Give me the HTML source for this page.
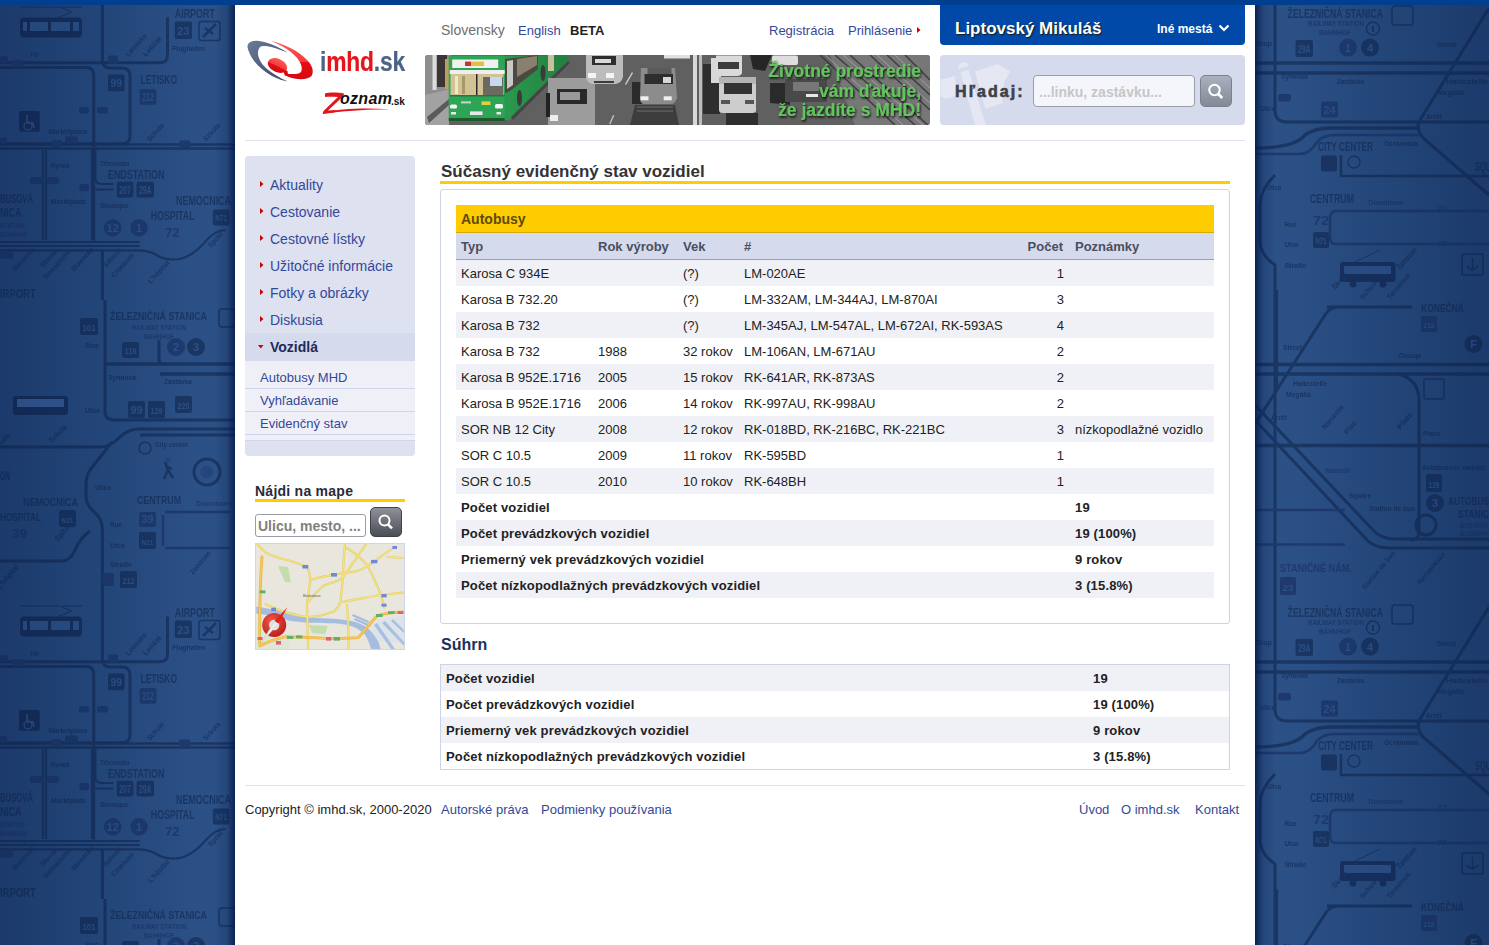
<!DOCTYPE html>
<html><head><meta charset="utf-8">
<style>
*{margin:0;padding:0;box-sizing:border-box}
html,body{width:1489px;height:945px;overflow:hidden}
body{font-family:"Liberation Sans",sans-serif;background:#27498a;position:relative;color:#222}
.abs{position:absolute}
#bg{position:absolute;left:0;top:0;width:1489px;height:945px}
#topbar{position:absolute;left:0;top:0;width:1489px;height:5px;background:#003f8f}
#page{position:absolute;left:235px;top:5px;width:1020px;height:940px;background:#fff}
.t{position:absolute;white-space:nowrap;line-height:1}
</style></head><body>
<svg id="bgsvg" class="abs" style="left:0;top:0" width="1489" height="945" viewBox="0 0 1489 945" font-family="Liberation Sans" font-weight="bold"><defs><linearGradient id="bgg" gradientUnits="userSpaceOnUse" x1="0" x2="1489" y1="0" y2="0"><stop offset="0" stop-color="#1c3a6b"/><stop offset="0.054" stop-color="#214376"/><stop offset="0.128" stop-color="#2b5085"/><stop offset="0.15" stop-color="#2c5186"/><stop offset="0.85" stop-color="#2c5186"/><stop offset="0.872" stop-color="#2b5085"/><stop offset="0.946" stop-color="#214376"/><stop offset="1" stop-color="#1c3a6b"/></linearGradient><linearGradient id="shl" gradientUnits="userSpaceOnUse" x1="215" x2="235" y1="0" y2="0"><stop offset="0" stop-color="#061a48" stop-opacity="0"/><stop offset="0.6" stop-color="#061a48" stop-opacity="0.2"/><stop offset="0.95" stop-color="#04184a" stop-opacity="0.75"/><stop offset="1" stop-color="#04184a" stop-opacity="0.85"/></linearGradient><linearGradient id="shr" gradientUnits="userSpaceOnUse" x1="1275" x2="1255" y1="0" y2="0"><stop offset="0" stop-color="#061a48" stop-opacity="0"/><stop offset="0.6" stop-color="#061a48" stop-opacity="0.2"/><stop offset="0.95" stop-color="#04184a" stop-opacity="0.75"/><stop offset="1" stop-color="#04184a" stop-opacity="0.85"/></linearGradient></defs><rect width="1489" height="945" fill="url(#bgg)"/><g opacity="0.55"><g transform="translate(0 0)"><path d="M0 62.7 H160 Q167.5 62.7 167.5 55 V17.5" stroke="#0e2148" stroke-width="3" fill="none"/><path d="M0 67.5 H86 Q93.7 67.5 93.7 75 V240.5" stroke="#0e2148" stroke-width="3" fill="none"/><path d="M102.4 5 V60 Q102.4 68 110 68 H122 Q130 68 130 76 V136 Q130 143.7 122 143.7 H0" stroke="#0e2148" stroke-width="3" fill="none"/><path d="M0 144.5 H235 M0 148.5 H235" stroke="#0e2148" stroke-width="2.5" fill="none"/><path d="M42.9 150 V240 M46 150 V240" stroke="#0e2148" stroke-width="2.2" fill="none"/><path d="M92 150 V240 M95.3 150 V178 Q95.3 184 102 184 H113.5 M95.3 189.5 H113.5" stroke="#0e2148" stroke-width="2.2" fill="none"/><path d="M0 242 H139.7 M0 246 H139.7 M0 250.3 H139.7 Q150 250.3 160 257 Q166 259.5 175 259.5 Q190 259 205 242 Q215 230 225.5 230" stroke="#0e2148" stroke-width="2.2" fill="none"/><path d="M102.4 250 V300" stroke="#0e2148" stroke-width="3" fill="none"/><rect x="20" y="17.5" width="62" height="20" rx="4" fill="#0a1a40"/><rect x="23" y="22" width="56" height="9" fill="#2c5088"/><rect x="27" y="22" width="3" height="15" fill="#0a1a40"/><rect x="48" y="22" width="3" height="15" fill="#0a1a40"/><rect x="70" y="22" width="3" height="15" fill="#0a1a40"/><path d="M21 7 H82 M58 17.5 L71.5 12 L62 8" stroke="#0e2148" stroke-width="1" fill="none"/><text x="30" y="57" font-size="8" fill="#0e2148" textLength="9" lengthAdjust="spacingAndGlyphs">Tér</text><rect x="0" y="56" width="8" height="7.5" rx="2" fill="#14295a"/><rect x="12" y="60" width="11" height="7" rx="2" fill="#14295a"/><rect x="108" y="55.6" width="10" height="7.9" rx="2" fill="#14295a"/><rect x="108" y="74.6" width="16.6" height="16.7" rx="2" fill="#0e2148"/><text x="116.3" y="87.3" font-size="11" fill="#2c5088" text-anchor="middle" textLength="11.600000000000001" lengthAdjust="spacingAndGlyphs">99</text><text x="140.5" y="84.2" font-size="12" fill="#0e2148" textLength="36.5" lengthAdjust="spacingAndGlyphs">LETISKO</text><rect x="139.7" y="89" width="16.7" height="15.8" rx="2" fill="#14295a"/><text x="148.04999999999998" y="100.8" font-size="10" fill="#2c5088" text-anchor="middle" textLength="11.7" lengthAdjust="spacingAndGlyphs">212</text><text x="174.7" y="17.5" font-size="12" fill="#0e2148" textLength="40.3" lengthAdjust="spacingAndGlyphs">AIRPORT</text><rect x="174.7" y="21.4" width="17.3" height="17.5" rx="2" fill="#0e2148"/><text x="183.35" y="34.9" font-size="11" fill="#2c5088" text-anchor="middle" textLength="12.3" lengthAdjust="spacingAndGlyphs">23</text><rect x="199" y="21.4" width="21" height="19" rx="2.5" fill="none" stroke="#0e2148" stroke-width="1.5"/><path d="M203 37 L216 24 M205 28 L213 34" stroke="#0e2148" stroke-width="2.5"/><text x="172" y="51" font-size="8" fill="#0e2148" textLength="33" lengthAdjust="spacingAndGlyphs">Flughafen</text><text x="128.6" y="57" font-size="7" fill="#0e2148" textLength="28" lengthAdjust="spacingAndGlyphs" transform="rotate(-48 128.6 57)">Lotnisko</text><text x="146" y="57" font-size="7" fill="#0e2148" textLength="24" lengthAdjust="spacingAndGlyphs" transform="rotate(-48 146 57)">Letiště</text><rect x="19" y="111" width="20.7" height="20.8" rx="2" fill="#0a1a40"/><circle cx="28" cy="126" r="4" fill="none" stroke="#2c5088" stroke-width="1.2"/><path d="M27 115 V123 H33 L34 128" stroke="#2c5088" stroke-width="1.5" fill="none"/><text x="48.4" y="134" font-size="8" fill="#0e2148" textLength="39" lengthAdjust="spacingAndGlyphs">Marketplace</text><rect x="79" y="107" width="10" height="6.5" rx="2" fill="#14295a"/><rect x="97" y="107" width="11" height="6.5" rx="2" fill="#14295a"/><rect x="0" y="137" width="7" height="6.7" rx="2" fill="#14295a"/><rect x="51.6" y="140" width="10.4" height="7" rx="2" fill="#14295a"/><rect x="65" y="136.5" width="12.8" height="7.2" rx="2" fill="#14295a"/><rect x="179" y="140.5" width="11.5" height="7.2" rx="2" fill="#14295a"/><text x="150" y="142" font-size="7" fill="#0e2148" textLength="22" lengthAdjust="spacingAndGlyphs" transform="rotate(-48 150 142)">Schule</text><text x="206" y="142" font-size="7" fill="#0e2148" textLength="22" lengthAdjust="spacingAndGlyphs" transform="rotate(-48 206 142)">Szkoła</text><text x="50.8" y="168" font-size="8" fill="#0e2148" textLength="19" lengthAdjust="spacingAndGlyphs">Rynek</text><text x="50.8" y="204" font-size="8" fill="#0e2148" textLength="35" lengthAdjust="spacingAndGlyphs">Marktplatz</text><rect x="30" y="177" width="13" height="7" rx="2" fill="#14295a"/><rect x="47" y="177" width="11.7" height="7" rx="2" fill="#14295a"/><text x="0" y="203" font-size="12" fill="#0e2148" textLength="33" lengthAdjust="spacingAndGlyphs">BUSOVÁ</text><text x="0" y="217" font-size="12" fill="#0e2148" textLength="21.4" lengthAdjust="spacingAndGlyphs">NICA</text><text x="0" y="228" font-size="8" fill="#14295a" textLength="24.5" lengthAdjust="spacingAndGlyphs">STATION</text><text x="0" y="237" font-size="8" fill="#14295a" textLength="27.7" lengthAdjust="spacingAndGlyphs">BAHNHOF</text><text x="100" y="166" font-size="8" fill="#0e2148" textLength="29.4" lengthAdjust="spacingAndGlyphs">Trhovisko</text><text x="108" y="178.6" font-size="12" fill="#0e2148" textLength="56.3" lengthAdjust="spacingAndGlyphs">ENDSTATION</text><rect x="116.7" y="181.7" width="16.7" height="15.9" rx="2" fill="#0e2148"/><text x="125.05" y="193.6" font-size="10" fill="#2c5088" text-anchor="middle" textLength="11.7" lengthAdjust="spacingAndGlyphs">207</text><rect x="136.5" y="181.7" width="17.5" height="15.9" rx="2" fill="#0e2148"/><text x="145.25" y="193.6" font-size="10" fill="#2c5088" text-anchor="middle" textLength="12.5" lengthAdjust="spacingAndGlyphs">29A</text><rect x="79.4" y="184" width="9.6" height="7.3" rx="2" fill="#14295a"/><text x="100" y="208" font-size="8" fill="#0e2148" textLength="28.6" lengthAdjust="spacingAndGlyphs">Slovaque</text><circle cx="112.7" cy="227.8" r="8.7" fill="#14295a"/><text x="112.7" y="231.8" font-size="11" fill="#2c5090" text-anchor="middle">12</text><circle cx="139" cy="227.8" r="8.7" fill="#14295a"/><text x="139" y="231.8" font-size="11" fill="#2c5090" text-anchor="middle">1</text><text x="176" y="204.8" font-size="12" fill="#0e2148" textLength="55" lengthAdjust="spacingAndGlyphs">NEMOCNICA</text><text x="150.8" y="219.8" font-size="12" fill="#0e2148" textLength="43.7" lengthAdjust="spacingAndGlyphs">HOSPITAL</text><text x="165" y="237" font-size="12" fill="#14295a" textLength="14.4" lengthAdjust="spacingAndGlyphs">72</text><rect x="212.8" y="209.5" width="16.6" height="15.9" rx="2" fill="#0e2148"/><text x="221.10000000000002" y="221.4" font-size="9" fill="#2c5088" text-anchor="middle" textLength="11.600000000000001" lengthAdjust="spacingAndGlyphs">N71</text><rect x="0" y="251.6" width="13.5" height="7.2" rx="2" fill="#14295a"/><text x="15" y="272" font-size="7" fill="#0e2148" textLength="30" lengthAdjust="spacingAndGlyphs" transform="rotate(-48 15 272)">Slovenská</text><text x="43" y="268" font-size="7" fill="#0e2148" textLength="22" lengthAdjust="spacingAndGlyphs" transform="rotate(-48 43 268)">Slovak</text><text x="46" y="280" font-size="7" fill="#0e2148" textLength="38" lengthAdjust="spacingAndGlyphs" transform="rotate(-48 46 280)">Slowakische</text><text x="74" y="272" font-size="7" fill="#0e2148" textLength="30" lengthAdjust="spacingAndGlyphs" transform="rotate(-48 74 272)">Slowacka</text><text x="106" y="268" font-size="7" fill="#0e2148" textLength="24" lengthAdjust="spacingAndGlyphs" transform="rotate(-48 106 268)">Szlovák</text><text x="114" y="278" font-size="7" fill="#0e2148" textLength="30" lengthAdjust="spacingAndGlyphs" transform="rotate(-48 114 278)">Словашка</text><text x="151" y="284" font-size="7" fill="#0e2148" textLength="28" lengthAdjust="spacingAndGlyphs" transform="rotate(-48 151 284)">L'hôpital</text><text x="211" y="248" font-size="7" fill="#0e2148" textLength="18" lengthAdjust="spacingAndGlyphs" transform="rotate(-48 211 248)">Spital</text><text x="0" y="297.6" font-size="12" fill="#0e2148" textLength="35.7" lengthAdjust="spacingAndGlyphs">IRPORT</text><path d="M105 300 V412 Q105 420 115 420 H235" stroke="#0e2148" stroke-width="3" fill="none"/><path d="M105 364 H235 M160 374 H235" stroke="#0e2148" stroke-width="3.5" fill="none"/><path d="M159 340 V360 Q159 364 165 364" stroke="#0e2148" stroke-width="3" fill="none"/><path d="M0 447 H100 Q110 447 120 437 Q128 429 140 429 H235" stroke="#0e2148" stroke-width="3" fill="none"/><path d="M140 435 H235" stroke="#0e2148" stroke-width="3" fill="none"/><path d="M112 442 L90 470 Q86 476 86 485 V496 Q86 505 94 512 Q102.4 518 102.4 530 V604" stroke="#0e2148" stroke-width="3" fill="none"/><path d="M0 561 H62 Q70 561 75 550 Q80 538 90 531" stroke="#0e2148" stroke-width="3" fill="none"/><path d="M165 512 H230 M165 548 H230 M163 515 V546" stroke="#14295a" stroke-width="2.5" fill="none"/><text x="110" y="320" font-size="11" fill="#0e2148" textLength="97" lengthAdjust="spacingAndGlyphs">ŽELEZNIČNÁ STANICA</text><text x="132" y="330" font-size="7" fill="#14295a" textLength="54" lengthAdjust="spacingAndGlyphs">RAILWAY STATION</text><text x="144" y="339" font-size="7" fill="#14295a" textLength="30" lengthAdjust="spacingAndGlyphs">BAHNHOF</text><rect x="80" y="318" width="18" height="17" rx="2" fill="#0e2148"/><text x="89.0" y="331" font-size="9" fill="#2c5088" text-anchor="middle" textLength="13" lengthAdjust="spacingAndGlyphs">101</text><text x="85" y="348" font-size="7" fill="#0e2148" textLength="14" lengthAdjust="spacingAndGlyphs">Stop</text><rect x="122" y="342" width="17" height="16" rx="2" fill="#0e2148"/><text x="130.5" y="354" font-size="9" fill="#2c5088" text-anchor="middle" textLength="12" lengthAdjust="spacingAndGlyphs">116</text><circle cx="176" cy="347" r="9" fill="#14295a"/><text x="176" y="351" font-size="11" fill="#2c5090" text-anchor="middle">2</text><circle cx="196" cy="347" r="9" fill="#0e2148"/><text x="196" y="351" font-size="11" fill="#2c5090" text-anchor="middle">3</text><rect x="219" y="309" width="16" height="18" rx="3" fill="none" stroke="#0e2148" stroke-width="1.5"/><text x="108" y="380" font-size="7" fill="#0e2148" textLength="28" lengthAdjust="spacingAndGlyphs">Зупинка</text><text x="164" y="384" font-size="7" fill="#0e2148" textLength="28" lengthAdjust="spacingAndGlyphs">Zastávka</text><text x="85" y="413" font-size="7" fill="#0e2148" textLength="15" lengthAdjust="spacingAndGlyphs">Ulice</text><rect x="128" y="401" width="17" height="17" rx="2" fill="#0e2148"/><text x="136.5" y="414" font-size="10" fill="#2c5088" text-anchor="middle" textLength="12" lengthAdjust="spacingAndGlyphs">99</text><rect x="148" y="401" width="17" height="17" rx="2" fill="#0e2148"/><text x="156.5" y="414" font-size="9" fill="#2c5088" text-anchor="middle" textLength="12" lengthAdjust="spacingAndGlyphs">129</text><rect x="175" y="396" width="17" height="17" rx="2" fill="#0e2148"/><text x="183.5" y="409" font-size="9" fill="#2c5088" text-anchor="middle" textLength="12" lengthAdjust="spacingAndGlyphs">220</text><rect x="13" y="396" width="55" height="19" rx="3" fill="#0a1a40"/><rect x="17" y="399" width="47" height="8" fill="#3a5f98"/><text x="0" y="447" font-size="8" fill="#0e2148" textLength="15" lengthAdjust="spacingAndGlyphs" transform="rotate(-45 0 447)">nule</text><text x="52" y="443" font-size="8" fill="#0e2148" textLength="22" lengthAdjust="spacingAndGlyphs" transform="rotate(-45 52 443)">Szkoła</text><text x="155" y="447" font-size="7" fill="#0e2148" textLength="33" lengthAdjust="spacingAndGlyphs">City center</text><circle cx="145" cy="448" r="6" fill="none" stroke="#0e2148" stroke-width="1.5"/><path d="M165 462 l3 8 l-4 9 M168 470 l5 8 M166 466 l6 3" stroke="#0e2148" stroke-width="2.5" fill="none"/><circle cx="168" cy="460" r="2.5" fill="#1f3e76"/><circle cx="207" cy="472" r="13" fill="none" stroke="#0e2148" stroke-width="3"/><circle cx="207" cy="472" r="6.5" fill="#1f3e76"/><text x="0" y="480" font-size="12" fill="#0e2148" textLength="10" lengthAdjust="spacingAndGlyphs">ON</text><text x="23" y="506" font-size="11" fill="#0e2148" textLength="55" lengthAdjust="spacingAndGlyphs">NEMOCNICA</text><text x="0" y="521" font-size="11" fill="#0e2148" textLength="41" lengthAdjust="spacingAndGlyphs">HOSPITAL</text><text x="12" y="538" font-size="12" fill="#14295a" textLength="15" lengthAdjust="spacingAndGlyphs">39</text><rect x="59" y="510" width="17" height="17" rx="2" fill="#0e2148"/><text x="67.5" y="523" font-size="8" fill="#2c5088" text-anchor="middle" textLength="12" lengthAdjust="spacingAndGlyphs">N21</text><text x="137" y="504" font-size="11" fill="#0e2148" textLength="44" lengthAdjust="spacingAndGlyphs">CENTRUM</text><rect x="139" y="512" width="17" height="15" rx="2" fill="#14295a"/><text x="147.5" y="523" font-size="10" fill="#2c5088" text-anchor="middle" textLength="12" lengthAdjust="spacingAndGlyphs">39</text><rect x="139" y="532" width="17" height="17" rx="2" fill="#0e2148"/><text x="147.5" y="545" font-size="8" fill="#2c5088" text-anchor="middle" textLength="12" lengthAdjust="spacingAndGlyphs">N21</text><text x="196" y="506" font-size="7" fill="#14295a" textLength="36" lengthAdjust="spacingAndGlyphs">Downtown</text><text x="95" y="490" font-size="7" fill="#0e2148" textLength="16" lengthAdjust="spacingAndGlyphs">Ulica</text><text x="110" y="527" font-size="7" fill="#0e2148" textLength="12" lengthAdjust="spacingAndGlyphs">Rue</text><text x="110" y="548" font-size="7" fill="#0e2148" textLength="15" lengthAdjust="spacingAndGlyphs">Utca</text><text x="110" y="567" font-size="7" fill="#0e2148" textLength="22" lengthAdjust="spacingAndGlyphs">Straße</text><rect x="120" y="571" width="17" height="17" rx="2" fill="#0e2148"/><text x="128.5" y="584" font-size="9" fill="#2c5088" text-anchor="middle" textLength="12" lengthAdjust="spacingAndGlyphs">212</text><rect x="102" y="573" width="12" height="13" rx="2" fill="#14295a"/><text x="193" y="575" font-size="7" fill="#0e2148" textLength="28" lengthAdjust="spacingAndGlyphs" transform="rotate(-50 193 575)">Zentrum</text><text x="58" y="542" font-size="8" fill="#0e2148" textLength="20" lengthAdjust="spacingAndGlyphs" transform="rotate(-50 58 542)">Spital</text><text x="0" y="590" font-size="8" fill="#0e2148" textLength="30" lengthAdjust="spacingAndGlyphs" transform="rotate(-50 0 590)">L'hôpital</text></g><g transform="translate(0 599)"><path d="M0 62.7 H160 Q167.5 62.7 167.5 55 V17.5" stroke="#0e2148" stroke-width="3" fill="none"/><path d="M0 67.5 H86 Q93.7 67.5 93.7 75 V240.5" stroke="#0e2148" stroke-width="3" fill="none"/><path d="M102.4 5 V60 Q102.4 68 110 68 H122 Q130 68 130 76 V136 Q130 143.7 122 143.7 H0" stroke="#0e2148" stroke-width="3" fill="none"/><path d="M0 144.5 H235 M0 148.5 H235" stroke="#0e2148" stroke-width="2.5" fill="none"/><path d="M42.9 150 V240 M46 150 V240" stroke="#0e2148" stroke-width="2.2" fill="none"/><path d="M92 150 V240 M95.3 150 V178 Q95.3 184 102 184 H113.5 M95.3 189.5 H113.5" stroke="#0e2148" stroke-width="2.2" fill="none"/><path d="M0 242 H139.7 M0 246 H139.7 M0 250.3 H139.7 Q150 250.3 160 257 Q166 259.5 175 259.5 Q190 259 205 242 Q215 230 225.5 230" stroke="#0e2148" stroke-width="2.2" fill="none"/><path d="M102.4 250 V300" stroke="#0e2148" stroke-width="3" fill="none"/><rect x="20" y="17.5" width="62" height="20" rx="4" fill="#0a1a40"/><rect x="23" y="22" width="56" height="9" fill="#2c5088"/><rect x="27" y="22" width="3" height="15" fill="#0a1a40"/><rect x="48" y="22" width="3" height="15" fill="#0a1a40"/><rect x="70" y="22" width="3" height="15" fill="#0a1a40"/><path d="M21 7 H82 M58 17.5 L71.5 12 L62 8" stroke="#0e2148" stroke-width="1" fill="none"/><text x="30" y="57" font-size="8" fill="#0e2148" textLength="9" lengthAdjust="spacingAndGlyphs">Tér</text><rect x="0" y="56" width="8" height="7.5" rx="2" fill="#14295a"/><rect x="12" y="60" width="11" height="7" rx="2" fill="#14295a"/><rect x="108" y="55.6" width="10" height="7.9" rx="2" fill="#14295a"/><rect x="108" y="74.6" width="16.6" height="16.7" rx="2" fill="#0e2148"/><text x="116.3" y="87.3" font-size="11" fill="#2c5088" text-anchor="middle" textLength="11.600000000000001" lengthAdjust="spacingAndGlyphs">99</text><text x="140.5" y="84.2" font-size="12" fill="#0e2148" textLength="36.5" lengthAdjust="spacingAndGlyphs">LETISKO</text><rect x="139.7" y="89" width="16.7" height="15.8" rx="2" fill="#14295a"/><text x="148.04999999999998" y="100.8" font-size="10" fill="#2c5088" text-anchor="middle" textLength="11.7" lengthAdjust="spacingAndGlyphs">212</text><text x="174.7" y="17.5" font-size="12" fill="#0e2148" textLength="40.3" lengthAdjust="spacingAndGlyphs">AIRPORT</text><rect x="174.7" y="21.4" width="17.3" height="17.5" rx="2" fill="#0e2148"/><text x="183.35" y="34.9" font-size="11" fill="#2c5088" text-anchor="middle" textLength="12.3" lengthAdjust="spacingAndGlyphs">23</text><rect x="199" y="21.4" width="21" height="19" rx="2.5" fill="none" stroke="#0e2148" stroke-width="1.5"/><path d="M203 37 L216 24 M205 28 L213 34" stroke="#0e2148" stroke-width="2.5"/><text x="172" y="51" font-size="8" fill="#0e2148" textLength="33" lengthAdjust="spacingAndGlyphs">Flughafen</text><text x="128.6" y="57" font-size="7" fill="#0e2148" textLength="28" lengthAdjust="spacingAndGlyphs" transform="rotate(-48 128.6 57)">Lotnisko</text><text x="146" y="57" font-size="7" fill="#0e2148" textLength="24" lengthAdjust="spacingAndGlyphs" transform="rotate(-48 146 57)">Letiště</text><rect x="19" y="111" width="20.7" height="20.8" rx="2" fill="#0a1a40"/><circle cx="28" cy="126" r="4" fill="none" stroke="#2c5088" stroke-width="1.2"/><path d="M27 115 V123 H33 L34 128" stroke="#2c5088" stroke-width="1.5" fill="none"/><text x="48.4" y="134" font-size="8" fill="#0e2148" textLength="39" lengthAdjust="spacingAndGlyphs">Marketplace</text><rect x="79" y="107" width="10" height="6.5" rx="2" fill="#14295a"/><rect x="97" y="107" width="11" height="6.5" rx="2" fill="#14295a"/><rect x="0" y="137" width="7" height="6.7" rx="2" fill="#14295a"/><rect x="51.6" y="140" width="10.4" height="7" rx="2" fill="#14295a"/><rect x="65" y="136.5" width="12.8" height="7.2" rx="2" fill="#14295a"/><rect x="179" y="140.5" width="11.5" height="7.2" rx="2" fill="#14295a"/><text x="150" y="142" font-size="7" fill="#0e2148" textLength="22" lengthAdjust="spacingAndGlyphs" transform="rotate(-48 150 142)">Schule</text><text x="206" y="142" font-size="7" fill="#0e2148" textLength="22" lengthAdjust="spacingAndGlyphs" transform="rotate(-48 206 142)">Szkoła</text><text x="50.8" y="168" font-size="8" fill="#0e2148" textLength="19" lengthAdjust="spacingAndGlyphs">Rynek</text><text x="50.8" y="204" font-size="8" fill="#0e2148" textLength="35" lengthAdjust="spacingAndGlyphs">Marktplatz</text><rect x="30" y="177" width="13" height="7" rx="2" fill="#14295a"/><rect x="47" y="177" width="11.7" height="7" rx="2" fill="#14295a"/><text x="0" y="203" font-size="12" fill="#0e2148" textLength="33" lengthAdjust="spacingAndGlyphs">BUSOVÁ</text><text x="0" y="217" font-size="12" fill="#0e2148" textLength="21.4" lengthAdjust="spacingAndGlyphs">NICA</text><text x="0" y="228" font-size="8" fill="#14295a" textLength="24.5" lengthAdjust="spacingAndGlyphs">STATION</text><text x="0" y="237" font-size="8" fill="#14295a" textLength="27.7" lengthAdjust="spacingAndGlyphs">BAHNHOF</text><text x="100" y="166" font-size="8" fill="#0e2148" textLength="29.4" lengthAdjust="spacingAndGlyphs">Trhovisko</text><text x="108" y="178.6" font-size="12" fill="#0e2148" textLength="56.3" lengthAdjust="spacingAndGlyphs">ENDSTATION</text><rect x="116.7" y="181.7" width="16.7" height="15.9" rx="2" fill="#0e2148"/><text x="125.05" y="193.6" font-size="10" fill="#2c5088" text-anchor="middle" textLength="11.7" lengthAdjust="spacingAndGlyphs">207</text><rect x="136.5" y="181.7" width="17.5" height="15.9" rx="2" fill="#0e2148"/><text x="145.25" y="193.6" font-size="10" fill="#2c5088" text-anchor="middle" textLength="12.5" lengthAdjust="spacingAndGlyphs">29A</text><rect x="79.4" y="184" width="9.6" height="7.3" rx="2" fill="#14295a"/><text x="100" y="208" font-size="8" fill="#0e2148" textLength="28.6" lengthAdjust="spacingAndGlyphs">Slovaque</text><circle cx="112.7" cy="227.8" r="8.7" fill="#14295a"/><text x="112.7" y="231.8" font-size="11" fill="#2c5090" text-anchor="middle">12</text><circle cx="139" cy="227.8" r="8.7" fill="#14295a"/><text x="139" y="231.8" font-size="11" fill="#2c5090" text-anchor="middle">1</text><text x="176" y="204.8" font-size="12" fill="#0e2148" textLength="55" lengthAdjust="spacingAndGlyphs">NEMOCNICA</text><text x="150.8" y="219.8" font-size="12" fill="#0e2148" textLength="43.7" lengthAdjust="spacingAndGlyphs">HOSPITAL</text><text x="165" y="237" font-size="12" fill="#14295a" textLength="14.4" lengthAdjust="spacingAndGlyphs">72</text><rect x="212.8" y="209.5" width="16.6" height="15.9" rx="2" fill="#0e2148"/><text x="221.10000000000002" y="221.4" font-size="9" fill="#2c5088" text-anchor="middle" textLength="11.600000000000001" lengthAdjust="spacingAndGlyphs">N71</text><rect x="0" y="251.6" width="13.5" height="7.2" rx="2" fill="#14295a"/><text x="15" y="272" font-size="7" fill="#0e2148" textLength="30" lengthAdjust="spacingAndGlyphs" transform="rotate(-48 15 272)">Slovenská</text><text x="43" y="268" font-size="7" fill="#0e2148" textLength="22" lengthAdjust="spacingAndGlyphs" transform="rotate(-48 43 268)">Slovak</text><text x="46" y="280" font-size="7" fill="#0e2148" textLength="38" lengthAdjust="spacingAndGlyphs" transform="rotate(-48 46 280)">Slowakische</text><text x="74" y="272" font-size="7" fill="#0e2148" textLength="30" lengthAdjust="spacingAndGlyphs" transform="rotate(-48 74 272)">Slowacka</text><text x="106" y="268" font-size="7" fill="#0e2148" textLength="24" lengthAdjust="spacingAndGlyphs" transform="rotate(-48 106 268)">Szlovák</text><text x="114" y="278" font-size="7" fill="#0e2148" textLength="30" lengthAdjust="spacingAndGlyphs" transform="rotate(-48 114 278)">Словашка</text><text x="151" y="284" font-size="7" fill="#0e2148" textLength="28" lengthAdjust="spacingAndGlyphs" transform="rotate(-48 151 284)">L'hôpital</text><text x="211" y="248" font-size="7" fill="#0e2148" textLength="18" lengthAdjust="spacingAndGlyphs" transform="rotate(-48 211 248)">Spital</text><text x="0" y="297.6" font-size="12" fill="#0e2148" textLength="35.7" lengthAdjust="spacingAndGlyphs">IRPORT</text><path d="M105 300 V412 Q105 420 115 420 H235" stroke="#0e2148" stroke-width="3" fill="none"/><path d="M105 364 H235 M160 374 H235" stroke="#0e2148" stroke-width="3.5" fill="none"/><path d="M159 340 V360 Q159 364 165 364" stroke="#0e2148" stroke-width="3" fill="none"/><path d="M0 447 H100 Q110 447 120 437 Q128 429 140 429 H235" stroke="#0e2148" stroke-width="3" fill="none"/><path d="M140 435 H235" stroke="#0e2148" stroke-width="3" fill="none"/><path d="M112 442 L90 470 Q86 476 86 485 V496 Q86 505 94 512 Q102.4 518 102.4 530 V604" stroke="#0e2148" stroke-width="3" fill="none"/><path d="M0 561 H62 Q70 561 75 550 Q80 538 90 531" stroke="#0e2148" stroke-width="3" fill="none"/><path d="M165 512 H230 M165 548 H230 M163 515 V546" stroke="#14295a" stroke-width="2.5" fill="none"/><text x="110" y="320" font-size="11" fill="#0e2148" textLength="97" lengthAdjust="spacingAndGlyphs">ŽELEZNIČNÁ STANICA</text><text x="132" y="330" font-size="7" fill="#14295a" textLength="54" lengthAdjust="spacingAndGlyphs">RAILWAY STATION</text><text x="144" y="339" font-size="7" fill="#14295a" textLength="30" lengthAdjust="spacingAndGlyphs">BAHNHOF</text><rect x="80" y="318" width="18" height="17" rx="2" fill="#0e2148"/><text x="89.0" y="331" font-size="9" fill="#2c5088" text-anchor="middle" textLength="13" lengthAdjust="spacingAndGlyphs">101</text><text x="85" y="348" font-size="7" fill="#0e2148" textLength="14" lengthAdjust="spacingAndGlyphs">Stop</text><rect x="122" y="342" width="17" height="16" rx="2" fill="#0e2148"/><text x="130.5" y="354" font-size="9" fill="#2c5088" text-anchor="middle" textLength="12" lengthAdjust="spacingAndGlyphs">116</text><circle cx="176" cy="347" r="9" fill="#14295a"/><text x="176" y="351" font-size="11" fill="#2c5090" text-anchor="middle">2</text><circle cx="196" cy="347" r="9" fill="#0e2148"/><text x="196" y="351" font-size="11" fill="#2c5090" text-anchor="middle">3</text><rect x="219" y="309" width="16" height="18" rx="3" fill="none" stroke="#0e2148" stroke-width="1.5"/><text x="108" y="380" font-size="7" fill="#0e2148" textLength="28" lengthAdjust="spacingAndGlyphs">Зупинка</text><text x="164" y="384" font-size="7" fill="#0e2148" textLength="28" lengthAdjust="spacingAndGlyphs">Zastávka</text><text x="85" y="413" font-size="7" fill="#0e2148" textLength="15" lengthAdjust="spacingAndGlyphs">Ulice</text><rect x="128" y="401" width="17" height="17" rx="2" fill="#0e2148"/><text x="136.5" y="414" font-size="10" fill="#2c5088" text-anchor="middle" textLength="12" lengthAdjust="spacingAndGlyphs">99</text><rect x="148" y="401" width="17" height="17" rx="2" fill="#0e2148"/><text x="156.5" y="414" font-size="9" fill="#2c5088" text-anchor="middle" textLength="12" lengthAdjust="spacingAndGlyphs">129</text><rect x="175" y="396" width="17" height="17" rx="2" fill="#0e2148"/><text x="183.5" y="409" font-size="9" fill="#2c5088" text-anchor="middle" textLength="12" lengthAdjust="spacingAndGlyphs">220</text><rect x="13" y="396" width="55" height="19" rx="3" fill="#0a1a40"/><rect x="17" y="399" width="47" height="8" fill="#3a5f98"/><text x="0" y="447" font-size="8" fill="#0e2148" textLength="15" lengthAdjust="spacingAndGlyphs" transform="rotate(-45 0 447)">nule</text><text x="52" y="443" font-size="8" fill="#0e2148" textLength="22" lengthAdjust="spacingAndGlyphs" transform="rotate(-45 52 443)">Szkoła</text><text x="155" y="447" font-size="7" fill="#0e2148" textLength="33" lengthAdjust="spacingAndGlyphs">City center</text><circle cx="145" cy="448" r="6" fill="none" stroke="#0e2148" stroke-width="1.5"/><path d="M165 462 l3 8 l-4 9 M168 470 l5 8 M166 466 l6 3" stroke="#0e2148" stroke-width="2.5" fill="none"/><circle cx="168" cy="460" r="2.5" fill="#1f3e76"/><circle cx="207" cy="472" r="13" fill="none" stroke="#0e2148" stroke-width="3"/><circle cx="207" cy="472" r="6.5" fill="#1f3e76"/><text x="0" y="480" font-size="12" fill="#0e2148" textLength="10" lengthAdjust="spacingAndGlyphs">ON</text><text x="23" y="506" font-size="11" fill="#0e2148" textLength="55" lengthAdjust="spacingAndGlyphs">NEMOCNICA</text><text x="0" y="521" font-size="11" fill="#0e2148" textLength="41" lengthAdjust="spacingAndGlyphs">HOSPITAL</text><text x="12" y="538" font-size="12" fill="#14295a" textLength="15" lengthAdjust="spacingAndGlyphs">39</text><rect x="59" y="510" width="17" height="17" rx="2" fill="#0e2148"/><text x="67.5" y="523" font-size="8" fill="#2c5088" text-anchor="middle" textLength="12" lengthAdjust="spacingAndGlyphs">N21</text><text x="137" y="504" font-size="11" fill="#0e2148" textLength="44" lengthAdjust="spacingAndGlyphs">CENTRUM</text><rect x="139" y="512" width="17" height="15" rx="2" fill="#14295a"/><text x="147.5" y="523" font-size="10" fill="#2c5088" text-anchor="middle" textLength="12" lengthAdjust="spacingAndGlyphs">39</text><rect x="139" y="532" width="17" height="17" rx="2" fill="#0e2148"/><text x="147.5" y="545" font-size="8" fill="#2c5088" text-anchor="middle" textLength="12" lengthAdjust="spacingAndGlyphs">N21</text><text x="196" y="506" font-size="7" fill="#14295a" textLength="36" lengthAdjust="spacingAndGlyphs">Downtown</text><text x="95" y="490" font-size="7" fill="#0e2148" textLength="16" lengthAdjust="spacingAndGlyphs">Ulica</text><text x="110" y="527" font-size="7" fill="#0e2148" textLength="12" lengthAdjust="spacingAndGlyphs">Rue</text><text x="110" y="548" font-size="7" fill="#0e2148" textLength="15" lengthAdjust="spacingAndGlyphs">Utca</text><text x="110" y="567" font-size="7" fill="#0e2148" textLength="22" lengthAdjust="spacingAndGlyphs">Straße</text><rect x="120" y="571" width="17" height="17" rx="2" fill="#0e2148"/><text x="128.5" y="584" font-size="9" fill="#2c5088" text-anchor="middle" textLength="12" lengthAdjust="spacingAndGlyphs">212</text><rect x="102" y="573" width="12" height="13" rx="2" fill="#14295a"/><text x="193" y="575" font-size="7" fill="#0e2148" textLength="28" lengthAdjust="spacingAndGlyphs" transform="rotate(-50 193 575)">Zentrum</text><text x="58" y="542" font-size="8" fill="#0e2148" textLength="20" lengthAdjust="spacingAndGlyphs" transform="rotate(-50 58 542)">Spital</text><text x="0" y="590" font-size="8" fill="#0e2148" textLength="30" lengthAdjust="spacingAndGlyphs" transform="rotate(-50 0 590)">L'hôpital</text></g><g transform="translate(0 -599)"><path d="M0 62.7 H160 Q167.5 62.7 167.5 55 V17.5" stroke="#0e2148" stroke-width="3" fill="none"/><path d="M0 67.5 H86 Q93.7 67.5 93.7 75 V240.5" stroke="#0e2148" stroke-width="3" fill="none"/><path d="M102.4 5 V60 Q102.4 68 110 68 H122 Q130 68 130 76 V136 Q130 143.7 122 143.7 H0" stroke="#0e2148" stroke-width="3" fill="none"/><path d="M0 144.5 H235 M0 148.5 H235" stroke="#0e2148" stroke-width="2.5" fill="none"/><path d="M42.9 150 V240 M46 150 V240" stroke="#0e2148" stroke-width="2.2" fill="none"/><path d="M92 150 V240 M95.3 150 V178 Q95.3 184 102 184 H113.5 M95.3 189.5 H113.5" stroke="#0e2148" stroke-width="2.2" fill="none"/><path d="M0 242 H139.7 M0 246 H139.7 M0 250.3 H139.7 Q150 250.3 160 257 Q166 259.5 175 259.5 Q190 259 205 242 Q215 230 225.5 230" stroke="#0e2148" stroke-width="2.2" fill="none"/><path d="M102.4 250 V300" stroke="#0e2148" stroke-width="3" fill="none"/><rect x="20" y="17.5" width="62" height="20" rx="4" fill="#0a1a40"/><rect x="23" y="22" width="56" height="9" fill="#2c5088"/><rect x="27" y="22" width="3" height="15" fill="#0a1a40"/><rect x="48" y="22" width="3" height="15" fill="#0a1a40"/><rect x="70" y="22" width="3" height="15" fill="#0a1a40"/><path d="M21 7 H82 M58 17.5 L71.5 12 L62 8" stroke="#0e2148" stroke-width="1" fill="none"/><text x="30" y="57" font-size="8" fill="#0e2148" textLength="9" lengthAdjust="spacingAndGlyphs">Tér</text><rect x="0" y="56" width="8" height="7.5" rx="2" fill="#14295a"/><rect x="12" y="60" width="11" height="7" rx="2" fill="#14295a"/><rect x="108" y="55.6" width="10" height="7.9" rx="2" fill="#14295a"/><rect x="108" y="74.6" width="16.6" height="16.7" rx="2" fill="#0e2148"/><text x="116.3" y="87.3" font-size="11" fill="#2c5088" text-anchor="middle" textLength="11.600000000000001" lengthAdjust="spacingAndGlyphs">99</text><text x="140.5" y="84.2" font-size="12" fill="#0e2148" textLength="36.5" lengthAdjust="spacingAndGlyphs">LETISKO</text><rect x="139.7" y="89" width="16.7" height="15.8" rx="2" fill="#14295a"/><text x="148.04999999999998" y="100.8" font-size="10" fill="#2c5088" text-anchor="middle" textLength="11.7" lengthAdjust="spacingAndGlyphs">212</text><text x="174.7" y="17.5" font-size="12" fill="#0e2148" textLength="40.3" lengthAdjust="spacingAndGlyphs">AIRPORT</text><rect x="174.7" y="21.4" width="17.3" height="17.5" rx="2" fill="#0e2148"/><text x="183.35" y="34.9" font-size="11" fill="#2c5088" text-anchor="middle" textLength="12.3" lengthAdjust="spacingAndGlyphs">23</text><rect x="199" y="21.4" width="21" height="19" rx="2.5" fill="none" stroke="#0e2148" stroke-width="1.5"/><path d="M203 37 L216 24 M205 28 L213 34" stroke="#0e2148" stroke-width="2.5"/><text x="172" y="51" font-size="8" fill="#0e2148" textLength="33" lengthAdjust="spacingAndGlyphs">Flughafen</text><text x="128.6" y="57" font-size="7" fill="#0e2148" textLength="28" lengthAdjust="spacingAndGlyphs" transform="rotate(-48 128.6 57)">Lotnisko</text><text x="146" y="57" font-size="7" fill="#0e2148" textLength="24" lengthAdjust="spacingAndGlyphs" transform="rotate(-48 146 57)">Letiště</text><rect x="19" y="111" width="20.7" height="20.8" rx="2" fill="#0a1a40"/><circle cx="28" cy="126" r="4" fill="none" stroke="#2c5088" stroke-width="1.2"/><path d="M27 115 V123 H33 L34 128" stroke="#2c5088" stroke-width="1.5" fill="none"/><text x="48.4" y="134" font-size="8" fill="#0e2148" textLength="39" lengthAdjust="spacingAndGlyphs">Marketplace</text><rect x="79" y="107" width="10" height="6.5" rx="2" fill="#14295a"/><rect x="97" y="107" width="11" height="6.5" rx="2" fill="#14295a"/><rect x="0" y="137" width="7" height="6.7" rx="2" fill="#14295a"/><rect x="51.6" y="140" width="10.4" height="7" rx="2" fill="#14295a"/><rect x="65" y="136.5" width="12.8" height="7.2" rx="2" fill="#14295a"/><rect x="179" y="140.5" width="11.5" height="7.2" rx="2" fill="#14295a"/><text x="150" y="142" font-size="7" fill="#0e2148" textLength="22" lengthAdjust="spacingAndGlyphs" transform="rotate(-48 150 142)">Schule</text><text x="206" y="142" font-size="7" fill="#0e2148" textLength="22" lengthAdjust="spacingAndGlyphs" transform="rotate(-48 206 142)">Szkoła</text><text x="50.8" y="168" font-size="8" fill="#0e2148" textLength="19" lengthAdjust="spacingAndGlyphs">Rynek</text><text x="50.8" y="204" font-size="8" fill="#0e2148" textLength="35" lengthAdjust="spacingAndGlyphs">Marktplatz</text><rect x="30" y="177" width="13" height="7" rx="2" fill="#14295a"/><rect x="47" y="177" width="11.7" height="7" rx="2" fill="#14295a"/><text x="0" y="203" font-size="12" fill="#0e2148" textLength="33" lengthAdjust="spacingAndGlyphs">BUSOVÁ</text><text x="0" y="217" font-size="12" fill="#0e2148" textLength="21.4" lengthAdjust="spacingAndGlyphs">NICA</text><text x="0" y="228" font-size="8" fill="#14295a" textLength="24.5" lengthAdjust="spacingAndGlyphs">STATION</text><text x="0" y="237" font-size="8" fill="#14295a" textLength="27.7" lengthAdjust="spacingAndGlyphs">BAHNHOF</text><text x="100" y="166" font-size="8" fill="#0e2148" textLength="29.4" lengthAdjust="spacingAndGlyphs">Trhovisko</text><text x="108" y="178.6" font-size="12" fill="#0e2148" textLength="56.3" lengthAdjust="spacingAndGlyphs">ENDSTATION</text><rect x="116.7" y="181.7" width="16.7" height="15.9" rx="2" fill="#0e2148"/><text x="125.05" y="193.6" font-size="10" fill="#2c5088" text-anchor="middle" textLength="11.7" lengthAdjust="spacingAndGlyphs">207</text><rect x="136.5" y="181.7" width="17.5" height="15.9" rx="2" fill="#0e2148"/><text x="145.25" y="193.6" font-size="10" fill="#2c5088" text-anchor="middle" textLength="12.5" lengthAdjust="spacingAndGlyphs">29A</text><rect x="79.4" y="184" width="9.6" height="7.3" rx="2" fill="#14295a"/><text x="100" y="208" font-size="8" fill="#0e2148" textLength="28.6" lengthAdjust="spacingAndGlyphs">Slovaque</text><circle cx="112.7" cy="227.8" r="8.7" fill="#14295a"/><text x="112.7" y="231.8" font-size="11" fill="#2c5090" text-anchor="middle">12</text><circle cx="139" cy="227.8" r="8.7" fill="#14295a"/><text x="139" y="231.8" font-size="11" fill="#2c5090" text-anchor="middle">1</text><text x="176" y="204.8" font-size="12" fill="#0e2148" textLength="55" lengthAdjust="spacingAndGlyphs">NEMOCNICA</text><text x="150.8" y="219.8" font-size="12" fill="#0e2148" textLength="43.7" lengthAdjust="spacingAndGlyphs">HOSPITAL</text><text x="165" y="237" font-size="12" fill="#14295a" textLength="14.4" lengthAdjust="spacingAndGlyphs">72</text><rect x="212.8" y="209.5" width="16.6" height="15.9" rx="2" fill="#0e2148"/><text x="221.10000000000002" y="221.4" font-size="9" fill="#2c5088" text-anchor="middle" textLength="11.600000000000001" lengthAdjust="spacingAndGlyphs">N71</text><rect x="0" y="251.6" width="13.5" height="7.2" rx="2" fill="#14295a"/><text x="15" y="272" font-size="7" fill="#0e2148" textLength="30" lengthAdjust="spacingAndGlyphs" transform="rotate(-48 15 272)">Slovenská</text><text x="43" y="268" font-size="7" fill="#0e2148" textLength="22" lengthAdjust="spacingAndGlyphs" transform="rotate(-48 43 268)">Slovak</text><text x="46" y="280" font-size="7" fill="#0e2148" textLength="38" lengthAdjust="spacingAndGlyphs" transform="rotate(-48 46 280)">Slowakische</text><text x="74" y="272" font-size="7" fill="#0e2148" textLength="30" lengthAdjust="spacingAndGlyphs" transform="rotate(-48 74 272)">Slowacka</text><text x="106" y="268" font-size="7" fill="#0e2148" textLength="24" lengthAdjust="spacingAndGlyphs" transform="rotate(-48 106 268)">Szlovák</text><text x="114" y="278" font-size="7" fill="#0e2148" textLength="30" lengthAdjust="spacingAndGlyphs" transform="rotate(-48 114 278)">Словашка</text><text x="151" y="284" font-size="7" fill="#0e2148" textLength="28" lengthAdjust="spacingAndGlyphs" transform="rotate(-48 151 284)">L'hôpital</text><text x="211" y="248" font-size="7" fill="#0e2148" textLength="18" lengthAdjust="spacingAndGlyphs" transform="rotate(-48 211 248)">Spital</text><text x="0" y="297.6" font-size="12" fill="#0e2148" textLength="35.7" lengthAdjust="spacingAndGlyphs">IRPORT</text><path d="M105 300 V412 Q105 420 115 420 H235" stroke="#0e2148" stroke-width="3" fill="none"/><path d="M105 364 H235 M160 374 H235" stroke="#0e2148" stroke-width="3.5" fill="none"/><path d="M159 340 V360 Q159 364 165 364" stroke="#0e2148" stroke-width="3" fill="none"/><path d="M0 447 H100 Q110 447 120 437 Q128 429 140 429 H235" stroke="#0e2148" stroke-width="3" fill="none"/><path d="M140 435 H235" stroke="#0e2148" stroke-width="3" fill="none"/><path d="M112 442 L90 470 Q86 476 86 485 V496 Q86 505 94 512 Q102.4 518 102.4 530 V604" stroke="#0e2148" stroke-width="3" fill="none"/><path d="M0 561 H62 Q70 561 75 550 Q80 538 90 531" stroke="#0e2148" stroke-width="3" fill="none"/><path d="M165 512 H230 M165 548 H230 M163 515 V546" stroke="#14295a" stroke-width="2.5" fill="none"/><text x="110" y="320" font-size="11" fill="#0e2148" textLength="97" lengthAdjust="spacingAndGlyphs">ŽELEZNIČNÁ STANICA</text><text x="132" y="330" font-size="7" fill="#14295a" textLength="54" lengthAdjust="spacingAndGlyphs">RAILWAY STATION</text><text x="144" y="339" font-size="7" fill="#14295a" textLength="30" lengthAdjust="spacingAndGlyphs">BAHNHOF</text><rect x="80" y="318" width="18" height="17" rx="2" fill="#0e2148"/><text x="89.0" y="331" font-size="9" fill="#2c5088" text-anchor="middle" textLength="13" lengthAdjust="spacingAndGlyphs">101</text><text x="85" y="348" font-size="7" fill="#0e2148" textLength="14" lengthAdjust="spacingAndGlyphs">Stop</text><rect x="122" y="342" width="17" height="16" rx="2" fill="#0e2148"/><text x="130.5" y="354" font-size="9" fill="#2c5088" text-anchor="middle" textLength="12" lengthAdjust="spacingAndGlyphs">116</text><circle cx="176" cy="347" r="9" fill="#14295a"/><text x="176" y="351" font-size="11" fill="#2c5090" text-anchor="middle">2</text><circle cx="196" cy="347" r="9" fill="#0e2148"/><text x="196" y="351" font-size="11" fill="#2c5090" text-anchor="middle">3</text><rect x="219" y="309" width="16" height="18" rx="3" fill="none" stroke="#0e2148" stroke-width="1.5"/><text x="108" y="380" font-size="7" fill="#0e2148" textLength="28" lengthAdjust="spacingAndGlyphs">Зупинка</text><text x="164" y="384" font-size="7" fill="#0e2148" textLength="28" lengthAdjust="spacingAndGlyphs">Zastávka</text><text x="85" y="413" font-size="7" fill="#0e2148" textLength="15" lengthAdjust="spacingAndGlyphs">Ulice</text><rect x="128" y="401" width="17" height="17" rx="2" fill="#0e2148"/><text x="136.5" y="414" font-size="10" fill="#2c5088" text-anchor="middle" textLength="12" lengthAdjust="spacingAndGlyphs">99</text><rect x="148" y="401" width="17" height="17" rx="2" fill="#0e2148"/><text x="156.5" y="414" font-size="9" fill="#2c5088" text-anchor="middle" textLength="12" lengthAdjust="spacingAndGlyphs">129</text><rect x="175" y="396" width="17" height="17" rx="2" fill="#0e2148"/><text x="183.5" y="409" font-size="9" fill="#2c5088" text-anchor="middle" textLength="12" lengthAdjust="spacingAndGlyphs">220</text><rect x="13" y="396" width="55" height="19" rx="3" fill="#0a1a40"/><rect x="17" y="399" width="47" height="8" fill="#3a5f98"/><text x="0" y="447" font-size="8" fill="#0e2148" textLength="15" lengthAdjust="spacingAndGlyphs" transform="rotate(-45 0 447)">nule</text><text x="52" y="443" font-size="8" fill="#0e2148" textLength="22" lengthAdjust="spacingAndGlyphs" transform="rotate(-45 52 443)">Szkoła</text><text x="155" y="447" font-size="7" fill="#0e2148" textLength="33" lengthAdjust="spacingAndGlyphs">City center</text><circle cx="145" cy="448" r="6" fill="none" stroke="#0e2148" stroke-width="1.5"/><path d="M165 462 l3 8 l-4 9 M168 470 l5 8 M166 466 l6 3" stroke="#0e2148" stroke-width="2.5" fill="none"/><circle cx="168" cy="460" r="2.5" fill="#1f3e76"/><circle cx="207" cy="472" r="13" fill="none" stroke="#0e2148" stroke-width="3"/><circle cx="207" cy="472" r="6.5" fill="#1f3e76"/><text x="0" y="480" font-size="12" fill="#0e2148" textLength="10" lengthAdjust="spacingAndGlyphs">ON</text><text x="23" y="506" font-size="11" fill="#0e2148" textLength="55" lengthAdjust="spacingAndGlyphs">NEMOCNICA</text><text x="0" y="521" font-size="11" fill="#0e2148" textLength="41" lengthAdjust="spacingAndGlyphs">HOSPITAL</text><text x="12" y="538" font-size="12" fill="#14295a" textLength="15" lengthAdjust="spacingAndGlyphs">39</text><rect x="59" y="510" width="17" height="17" rx="2" fill="#0e2148"/><text x="67.5" y="523" font-size="8" fill="#2c5088" text-anchor="middle" textLength="12" lengthAdjust="spacingAndGlyphs">N21</text><text x="137" y="504" font-size="11" fill="#0e2148" textLength="44" lengthAdjust="spacingAndGlyphs">CENTRUM</text><rect x="139" y="512" width="17" height="15" rx="2" fill="#14295a"/><text x="147.5" y="523" font-size="10" fill="#2c5088" text-anchor="middle" textLength="12" lengthAdjust="spacingAndGlyphs">39</text><rect x="139" y="532" width="17" height="17" rx="2" fill="#0e2148"/><text x="147.5" y="545" font-size="8" fill="#2c5088" text-anchor="middle" textLength="12" lengthAdjust="spacingAndGlyphs">N21</text><text x="196" y="506" font-size="7" fill="#14295a" textLength="36" lengthAdjust="spacingAndGlyphs">Downtown</text><text x="95" y="490" font-size="7" fill="#0e2148" textLength="16" lengthAdjust="spacingAndGlyphs">Ulica</text><text x="110" y="527" font-size="7" fill="#0e2148" textLength="12" lengthAdjust="spacingAndGlyphs">Rue</text><text x="110" y="548" font-size="7" fill="#0e2148" textLength="15" lengthAdjust="spacingAndGlyphs">Utca</text><text x="110" y="567" font-size="7" fill="#0e2148" textLength="22" lengthAdjust="spacingAndGlyphs">Straße</text><rect x="120" y="571" width="17" height="17" rx="2" fill="#0e2148"/><text x="128.5" y="584" font-size="9" fill="#2c5088" text-anchor="middle" textLength="12" lengthAdjust="spacingAndGlyphs">212</text><rect x="102" y="573" width="12" height="13" rx="2" fill="#14295a"/><text x="193" y="575" font-size="7" fill="#0e2148" textLength="28" lengthAdjust="spacingAndGlyphs" transform="rotate(-50 193 575)">Zentrum</text><text x="58" y="542" font-size="8" fill="#0e2148" textLength="20" lengthAdjust="spacingAndGlyphs" transform="rotate(-50 58 542)">Spital</text><text x="0" y="590" font-size="8" fill="#0e2148" textLength="30" lengthAdjust="spacingAndGlyphs" transform="rotate(-50 0 590)">L'hôpital</text></g><g transform="translate(1255 0)"><path d="M0 63 H234 M0 73 H234" stroke="#0e2148" stroke-width="3.5" fill="none"/><path d="M20 0 V110 Q20 122 32 122 H234" stroke="#0e2148" stroke-width="3" fill="none"/><path d="M234 8 L165 120 Q160 128 168 138 L234 195" stroke="#0e2148" stroke-width="3" fill="none"/><path d="M0 148 Q40 148 50 135 Q60 128 75 128 H165" stroke="#0e2148" stroke-width="3.5" fill="none"/><path d="M0 154 H45 Q55 154 62 142 Q68 135 80 135 H165" stroke="#14295a" stroke-width="2.5" fill="none"/><path d="M86 155 V176 H234" stroke="#0e2148" stroke-width="2.5" fill="none"/><path d="M0 190 V945" stroke="#0e2148" stroke-width="0" fill="none"/><path d="M20 175 Q5 190 5 205 V240 Q5 255 20 265 V600" stroke="#0e2148" stroke-width="3" fill="none"/><path d="M80 211 H234 M80 244 H234 M80 211 Q75 211 75 220 V236 Q75 244 80 244" stroke="#14295a" stroke-width="2.5" fill="none"/><text x="32.6" y="17.5" font-size="12" fill="#0e2148" textLength="95.4" lengthAdjust="spacingAndGlyphs">ŽELEZNIČNÁ STANICA</text><text x="53" y="26" font-size="8" fill="#14295a" textLength="56" lengthAdjust="spacingAndGlyphs">RAILWAY STATION</text><text x="64" y="35" font-size="8" fill="#14295a" textLength="32" lengthAdjust="spacingAndGlyphs">BAHNHOF</text><rect x="137" y="6" width="21" height="19" rx="3" fill="none" stroke="#0e2148" stroke-width="1.5"/><circle cx="118" cy="28.6" r="6.5" fill="none" stroke="#0e2148" stroke-width="1.5"/><rect x="117" y="26" width="2" height="6" fill="#0e2148"/><text x="1" y="46" font-size="8" fill="#0e2148" textLength="16" lengthAdjust="spacingAndGlyphs">Stop</text><rect x="40.5" y="40" width="17.5" height="17" rx="2" fill="#0e2148"/><text x="49.25" y="53" font-size="10" fill="#2c5088" text-anchor="middle" textLength="12.5" lengthAdjust="spacingAndGlyphs">29A</text><circle cx="93" cy="47.6" r="9" fill="#14295a"/><text x="93" y="51.6" font-size="11" fill="#2c5090" text-anchor="middle">1</text><circle cx="115" cy="47.6" r="9" fill="#0e2148"/><text x="115" y="51.6" font-size="11" fill="#2c5090" text-anchor="middle">4</text><text x="26" y="79" font-size="8" fill="#0e2148" textLength="27" lengthAdjust="spacingAndGlyphs">Зупинка</text><text x="82" y="84" font-size="8" fill="#0e2148" textLength="27" lengthAdjust="spacingAndGlyphs">Zastávka</text><text x="5.6" y="111" font-size="8" fill="#0e2148" textLength="14.4" lengthAdjust="spacingAndGlyphs">Ulice</text><rect x="66" y="101.6" width="17" height="16" rx="2" fill="#14295a"/><text x="74.5" y="113.6" font-size="11" fill="#2c5088" text-anchor="middle" textLength="12" lengthAdjust="spacingAndGlyphs">24</text><rect x="23" y="94" width="13" height="7.6" rx="2" fill="#14295a"/><text x="182" y="47" font-size="8" fill="#0e2148" textLength="19" lengthAdjust="spacingAndGlyphs">Street</text><text x="191" y="84" font-size="8" fill="#0e2148" textLength="42" lengthAdjust="spacingAndGlyphs">Haltestelle</text><text x="183" y="95" font-size="8" fill="#0e2148" textLength="26" lengthAdjust="spacingAndGlyphs">Megálló</text><text x="171" y="119" font-size="8" fill="#0e2148" textLength="16" lengthAdjust="spacingAndGlyphs">Arrêt</text><text x="63" y="151" font-size="12" fill="#0e2148" textLength="55" lengthAdjust="spacingAndGlyphs">CITY CENTER</text><text x="129.4" y="146" font-size="8" fill="#0e2148" textLength="33.6" lengthAdjust="spacingAndGlyphs">Остановка</text><rect x="66" y="155.6" width="16" height="15.8" rx="2" fill="#0e2148"/><circle cx="99" cy="162" r="6" fill="none" stroke="#0e2148" stroke-width="1.3"/><text x="220" y="171" font-size="12" fill="#0e2148" textLength="16" lengthAdjust="spacingAndGlyphs">SQU</text><text x="55" y="203" font-size="12" fill="#0e2148" textLength="44" lengthAdjust="spacingAndGlyphs">CENTRUM</text><text x="113.6" y="205" font-size="8" fill="#14295a" textLength="35" lengthAdjust="spacingAndGlyphs">Downtown</text><text x="58" y="225" font-size="12" fill="#14295a" textLength="16" lengthAdjust="spacingAndGlyphs">72</text><rect x="58" y="232" width="16" height="16" rx="2" fill="#0e2148"/><text x="66.0" y="244" font-size="9" fill="#2c5088" text-anchor="middle" textLength="11" lengthAdjust="spacingAndGlyphs">N71</text><text x="12" y="190" font-size="8" fill="#0e2148" textLength="14" lengthAdjust="spacingAndGlyphs">Ulica</text><text x="29.4" y="227" font-size="8" fill="#0e2148" textLength="12" lengthAdjust="spacingAndGlyphs">Rue</text><text x="29.4" y="247" font-size="8" fill="#0e2148" textLength="14" lengthAdjust="spacingAndGlyphs">Utca</text><text x="29.4" y="268" font-size="8" fill="#0e2148" textLength="22" lengthAdjust="spacingAndGlyphs">Straße</text><rect x="207" y="254" width="21" height="21" rx="2" fill="none" stroke="#0e2148" stroke-width="1.5"/><path d="M217.5 258 V271 M212 266 Q217.5 273 223 266" stroke="#0e2148" stroke-width="1.5" fill="none"/><rect x="85" y="262" width="55.5" height="20" rx="3" fill="#0a1a40"/><rect x="89" y="266" width="47" height="8" fill="#2c5088"/><circle cx="98" cy="284" r="3.5" fill="#0a1a40"/><circle cx="128" cy="284" r="3.5" fill="#0a1a40"/><path d="M100 262 L125 250" stroke="#0e2148" stroke-width="1"/><text x="145" y="270" font-size="8" fill="#0e2148" textLength="26" lengthAdjust="spacingAndGlyphs" transform="rotate(-48 145 270)">Zentrum</text><text x="182" y="211" font-size="8" fill="#14295a" textLength="10" lengthAdjust="spacingAndGlyphs">72</text><text x="182" y="246" font-size="8" fill="#14295a" textLength="10" lengthAdjust="spacingAndGlyphs">72</text><path d="M21.6 290 V391" stroke="#0e2148" stroke-width="3" fill="none"/><path d="M72 307 H157" stroke="#0e2148" stroke-width="3" fill="none"/><path d="M83 307 Q75 307 70 315 L0 424" stroke="#0e2148" stroke-width="3" fill="none"/><path d="M0 364.6 H234 M0 374 H234" stroke="#0e2148" stroke-width="3.5" fill="none"/><path d="M144 374 Q164 380 164 400 V532 Q164 540 156 540" stroke="#0e2148" stroke-width="3" fill="none"/><path d="M0 445.6 H234" stroke="#0e2148" stroke-width="3.5" fill="none"/><path d="M0 405 L118 530 Q126 539 140 539 H234 M0 420 L112 540 Q120 548 134 548 H234" stroke="#0e2148" stroke-width="3" fill="none"/><path d="M0 510 H90 M0 544.6 H90" stroke="#14295a" stroke-width="2.5" fill="none"/><circle cx="171" cy="525" r="10" fill="none" stroke="#0e2148" stroke-width="3"/><text x="166" y="312" font-size="11" fill="#0e2148" textLength="43" lengthAdjust="spacingAndGlyphs">KONEČNÁ</text><rect x="166" y="316" width="16" height="16" rx="2" fill="#14295a"/><text x="174.0" y="328" font-size="8" fill="#2c5088" text-anchor="middle" textLength="11" lengthAdjust="spacingAndGlyphs">212</text><circle cx="218.5" cy="344" r="9" fill="#0e2148"/><text x="218.5" y="348" font-size="11" fill="#2c5090" text-anchor="middle">F</text><text x="28" y="350" font-size="7" fill="#0e2148" textLength="19" lengthAdjust="spacingAndGlyphs">Street</text><text x="144" y="358" font-size="7" fill="#0e2148" textLength="22" lengthAdjust="spacingAndGlyphs">Площа</text><text x="38" y="386" font-size="7" fill="#0e2148" textLength="34" lengthAdjust="spacingAndGlyphs">Haltestelle</text><text x="31" y="397" font-size="7" fill="#0e2148" textLength="25" lengthAdjust="spacingAndGlyphs">Megálló</text><text x="16" y="420" font-size="7" fill="#0e2148" textLength="16" lengthAdjust="spacingAndGlyphs">Arrêt</text><rect x="169" y="379" width="20" height="20" rx="2" fill="none" stroke="#0e2148" stroke-width="1.5"/><text x="168" y="436" font-size="7" fill="#0e2148" textLength="17" lengthAdjust="spacingAndGlyphs">Place</text><text x="70" y="473" font-size="7" fill="#14295a" textLength="25" lengthAdjust="spacingAndGlyphs">Náměstí</text><text x="167" y="470" font-size="7" fill="#0e2148" textLength="63" lengthAdjust="spacingAndGlyphs">Autobusové nádraží</text><rect x="171" y="474" width="16" height="18" rx="2" fill="#0e2148"/><text x="179.0" y="488" font-size="9" fill="#2c5088" text-anchor="middle" textLength="11" lengthAdjust="spacingAndGlyphs">129</text><circle cx="180" cy="503" r="9" fill="#0e2148"/><text x="180" y="507" font-size="11" fill="#2c5090" text-anchor="middle">3</text><text x="193" y="505" font-size="11" fill="#0e2148" textLength="41" lengthAdjust="spacingAndGlyphs">AUTOBUS</text><text x="203" y="518" font-size="11" fill="#0e2148" textLength="31" lengthAdjust="spacingAndGlyphs">STANIC</text><text x="205" y="528" font-size="7" fill="#14295a" textLength="29" lengthAdjust="spacingAndGlyphs">BUS STAT</text><text x="205" y="536" font-size="7" fill="#14295a" textLength="29" lengthAdjust="spacingAndGlyphs">BUSBAHN</text><text x="94" y="498" font-size="7" fill="#0e2148" textLength="22" lengthAdjust="spacingAndGlyphs">Square</text><text x="114" y="511" font-size="7" fill="#0e2148" textLength="46" lengthAdjust="spacingAndGlyphs">Station de bus</text><text x="25" y="572" font-size="11" fill="#14295a" textLength="72" lengthAdjust="spacingAndGlyphs">STANIČNÉ NÁM.</text><rect x="25" y="577" width="16" height="18" rx="2" fill="#14295a"/><text x="33.0" y="591" font-size="9" fill="#2c5088" text-anchor="middle" textLength="11" lengthAdjust="spacingAndGlyphs">23</text><text x="80" y="290" font-size="7" fill="#0e2148" textLength="20" lengthAdjust="spacingAndGlyphs" transform="rotate(-50 80 290)">Škola</text><text x="108" y="300" font-size="7" fill="#0e2148" textLength="24" lengthAdjust="spacingAndGlyphs" transform="rotate(-50 108 300)">School</text><text x="135" y="300" font-size="7" fill="#0e2148" textLength="32" lengthAdjust="spacingAndGlyphs" transform="rotate(-50 135 300)">Terminus</text><text x="70" y="430" font-size="7" fill="#0e2148" textLength="30" lengthAdjust="spacingAndGlyphs" transform="rotate(-50 70 430)">Námestie</text><text x="92" y="435" font-size="7" fill="#0e2148" textLength="16" lengthAdjust="spacingAndGlyphs" transform="rotate(-50 92 435)">Plac</text><text x="145" y="430" font-size="7" fill="#0e2148" textLength="20" lengthAdjust="spacingAndGlyphs" transform="rotate(-50 145 430)">Platz</text><text x="110" y="590" font-size="7" fill="#0e2148" textLength="48" lengthAdjust="spacingAndGlyphs" transform="rotate(-50 110 590)">Station de bus</text><text x="165" y="585" font-size="7" fill="#0e2148" textLength="40" lengthAdjust="spacingAndGlyphs" transform="rotate(-50 165 585)">Автовокзал</text></g><g transform="translate(1255 599)"><path d="M0 63 H234 M0 73 H234" stroke="#0e2148" stroke-width="3.5" fill="none"/><path d="M20 0 V110 Q20 122 32 122 H234" stroke="#0e2148" stroke-width="3" fill="none"/><path d="M234 8 L165 120 Q160 128 168 138 L234 195" stroke="#0e2148" stroke-width="3" fill="none"/><path d="M0 148 Q40 148 50 135 Q60 128 75 128 H165" stroke="#0e2148" stroke-width="3.5" fill="none"/><path d="M0 154 H45 Q55 154 62 142 Q68 135 80 135 H165" stroke="#14295a" stroke-width="2.5" fill="none"/><path d="M86 155 V176 H234" stroke="#0e2148" stroke-width="2.5" fill="none"/><path d="M0 190 V945" stroke="#0e2148" stroke-width="0" fill="none"/><path d="M20 175 Q5 190 5 205 V240 Q5 255 20 265 V600" stroke="#0e2148" stroke-width="3" fill="none"/><path d="M80 211 H234 M80 244 H234 M80 211 Q75 211 75 220 V236 Q75 244 80 244" stroke="#14295a" stroke-width="2.5" fill="none"/><text x="32.6" y="17.5" font-size="12" fill="#0e2148" textLength="95.4" lengthAdjust="spacingAndGlyphs">ŽELEZNIČNÁ STANICA</text><text x="53" y="26" font-size="8" fill="#14295a" textLength="56" lengthAdjust="spacingAndGlyphs">RAILWAY STATION</text><text x="64" y="35" font-size="8" fill="#14295a" textLength="32" lengthAdjust="spacingAndGlyphs">BAHNHOF</text><rect x="137" y="6" width="21" height="19" rx="3" fill="none" stroke="#0e2148" stroke-width="1.5"/><circle cx="118" cy="28.6" r="6.5" fill="none" stroke="#0e2148" stroke-width="1.5"/><rect x="117" y="26" width="2" height="6" fill="#0e2148"/><text x="1" y="46" font-size="8" fill="#0e2148" textLength="16" lengthAdjust="spacingAndGlyphs">Stop</text><rect x="40.5" y="40" width="17.5" height="17" rx="2" fill="#0e2148"/><text x="49.25" y="53" font-size="10" fill="#2c5088" text-anchor="middle" textLength="12.5" lengthAdjust="spacingAndGlyphs">29A</text><circle cx="93" cy="47.6" r="9" fill="#14295a"/><text x="93" y="51.6" font-size="11" fill="#2c5090" text-anchor="middle">1</text><circle cx="115" cy="47.6" r="9" fill="#0e2148"/><text x="115" y="51.6" font-size="11" fill="#2c5090" text-anchor="middle">4</text><text x="26" y="79" font-size="8" fill="#0e2148" textLength="27" lengthAdjust="spacingAndGlyphs">Зупинка</text><text x="82" y="84" font-size="8" fill="#0e2148" textLength="27" lengthAdjust="spacingAndGlyphs">Zastávka</text><text x="5.6" y="111" font-size="8" fill="#0e2148" textLength="14.4" lengthAdjust="spacingAndGlyphs">Ulice</text><rect x="66" y="101.6" width="17" height="16" rx="2" fill="#14295a"/><text x="74.5" y="113.6" font-size="11" fill="#2c5088" text-anchor="middle" textLength="12" lengthAdjust="spacingAndGlyphs">24</text><rect x="23" y="94" width="13" height="7.6" rx="2" fill="#14295a"/><text x="182" y="47" font-size="8" fill="#0e2148" textLength="19" lengthAdjust="spacingAndGlyphs">Street</text><text x="191" y="84" font-size="8" fill="#0e2148" textLength="42" lengthAdjust="spacingAndGlyphs">Haltestelle</text><text x="183" y="95" font-size="8" fill="#0e2148" textLength="26" lengthAdjust="spacingAndGlyphs">Megálló</text><text x="171" y="119" font-size="8" fill="#0e2148" textLength="16" lengthAdjust="spacingAndGlyphs">Arrêt</text><text x="63" y="151" font-size="12" fill="#0e2148" textLength="55" lengthAdjust="spacingAndGlyphs">CITY CENTER</text><text x="129.4" y="146" font-size="8" fill="#0e2148" textLength="33.6" lengthAdjust="spacingAndGlyphs">Остановка</text><rect x="66" y="155.6" width="16" height="15.8" rx="2" fill="#0e2148"/><circle cx="99" cy="162" r="6" fill="none" stroke="#0e2148" stroke-width="1.3"/><text x="220" y="171" font-size="12" fill="#0e2148" textLength="16" lengthAdjust="spacingAndGlyphs">SQU</text><text x="55" y="203" font-size="12" fill="#0e2148" textLength="44" lengthAdjust="spacingAndGlyphs">CENTRUM</text><text x="113.6" y="205" font-size="8" fill="#14295a" textLength="35" lengthAdjust="spacingAndGlyphs">Downtown</text><text x="58" y="225" font-size="12" fill="#14295a" textLength="16" lengthAdjust="spacingAndGlyphs">72</text><rect x="58" y="232" width="16" height="16" rx="2" fill="#0e2148"/><text x="66.0" y="244" font-size="9" fill="#2c5088" text-anchor="middle" textLength="11" lengthAdjust="spacingAndGlyphs">N71</text><text x="12" y="190" font-size="8" fill="#0e2148" textLength="14" lengthAdjust="spacingAndGlyphs">Ulica</text><text x="29.4" y="227" font-size="8" fill="#0e2148" textLength="12" lengthAdjust="spacingAndGlyphs">Rue</text><text x="29.4" y="247" font-size="8" fill="#0e2148" textLength="14" lengthAdjust="spacingAndGlyphs">Utca</text><text x="29.4" y="268" font-size="8" fill="#0e2148" textLength="22" lengthAdjust="spacingAndGlyphs">Straße</text><rect x="207" y="254" width="21" height="21" rx="2" fill="none" stroke="#0e2148" stroke-width="1.5"/><path d="M217.5 258 V271 M212 266 Q217.5 273 223 266" stroke="#0e2148" stroke-width="1.5" fill="none"/><rect x="85" y="262" width="55.5" height="20" rx="3" fill="#0a1a40"/><rect x="89" y="266" width="47" height="8" fill="#2c5088"/><circle cx="98" cy="284" r="3.5" fill="#0a1a40"/><circle cx="128" cy="284" r="3.5" fill="#0a1a40"/><path d="M100 262 L125 250" stroke="#0e2148" stroke-width="1"/><text x="145" y="270" font-size="8" fill="#0e2148" textLength="26" lengthAdjust="spacingAndGlyphs" transform="rotate(-48 145 270)">Zentrum</text><text x="182" y="211" font-size="8" fill="#14295a" textLength="10" lengthAdjust="spacingAndGlyphs">72</text><text x="182" y="246" font-size="8" fill="#14295a" textLength="10" lengthAdjust="spacingAndGlyphs">72</text><path d="M21.6 290 V391" stroke="#0e2148" stroke-width="3" fill="none"/><path d="M72 307 H157" stroke="#0e2148" stroke-width="3" fill="none"/><path d="M83 307 Q75 307 70 315 L0 424" stroke="#0e2148" stroke-width="3" fill="none"/><path d="M0 364.6 H234 M0 374 H234" stroke="#0e2148" stroke-width="3.5" fill="none"/><path d="M144 374 Q164 380 164 400 V532 Q164 540 156 540" stroke="#0e2148" stroke-width="3" fill="none"/><path d="M0 445.6 H234" stroke="#0e2148" stroke-width="3.5" fill="none"/><path d="M0 405 L118 530 Q126 539 140 539 H234 M0 420 L112 540 Q120 548 134 548 H234" stroke="#0e2148" stroke-width="3" fill="none"/><path d="M0 510 H90 M0 544.6 H90" stroke="#14295a" stroke-width="2.5" fill="none"/><circle cx="171" cy="525" r="10" fill="none" stroke="#0e2148" stroke-width="3"/><text x="166" y="312" font-size="11" fill="#0e2148" textLength="43" lengthAdjust="spacingAndGlyphs">KONEČNÁ</text><rect x="166" y="316" width="16" height="16" rx="2" fill="#14295a"/><text x="174.0" y="328" font-size="8" fill="#2c5088" text-anchor="middle" textLength="11" lengthAdjust="spacingAndGlyphs">212</text><circle cx="218.5" cy="344" r="9" fill="#0e2148"/><text x="218.5" y="348" font-size="11" fill="#2c5090" text-anchor="middle">F</text><text x="28" y="350" font-size="7" fill="#0e2148" textLength="19" lengthAdjust="spacingAndGlyphs">Street</text><text x="144" y="358" font-size="7" fill="#0e2148" textLength="22" lengthAdjust="spacingAndGlyphs">Площа</text><text x="38" y="386" font-size="7" fill="#0e2148" textLength="34" lengthAdjust="spacingAndGlyphs">Haltestelle</text><text x="31" y="397" font-size="7" fill="#0e2148" textLength="25" lengthAdjust="spacingAndGlyphs">Megálló</text><text x="16" y="420" font-size="7" fill="#0e2148" textLength="16" lengthAdjust="spacingAndGlyphs">Arrêt</text><rect x="169" y="379" width="20" height="20" rx="2" fill="none" stroke="#0e2148" stroke-width="1.5"/><text x="168" y="436" font-size="7" fill="#0e2148" textLength="17" lengthAdjust="spacingAndGlyphs">Place</text><text x="70" y="473" font-size="7" fill="#14295a" textLength="25" lengthAdjust="spacingAndGlyphs">Náměstí</text><text x="167" y="470" font-size="7" fill="#0e2148" textLength="63" lengthAdjust="spacingAndGlyphs">Autobusové nádraží</text><rect x="171" y="474" width="16" height="18" rx="2" fill="#0e2148"/><text x="179.0" y="488" font-size="9" fill="#2c5088" text-anchor="middle" textLength="11" lengthAdjust="spacingAndGlyphs">129</text><circle cx="180" cy="503" r="9" fill="#0e2148"/><text x="180" y="507" font-size="11" fill="#2c5090" text-anchor="middle">3</text><text x="193" y="505" font-size="11" fill="#0e2148" textLength="41" lengthAdjust="spacingAndGlyphs">AUTOBUS</text><text x="203" y="518" font-size="11" fill="#0e2148" textLength="31" lengthAdjust="spacingAndGlyphs">STANIC</text><text x="205" y="528" font-size="7" fill="#14295a" textLength="29" lengthAdjust="spacingAndGlyphs">BUS STAT</text><text x="205" y="536" font-size="7" fill="#14295a" textLength="29" lengthAdjust="spacingAndGlyphs">BUSBAHN</text><text x="94" y="498" font-size="7" fill="#0e2148" textLength="22" lengthAdjust="spacingAndGlyphs">Square</text><text x="114" y="511" font-size="7" fill="#0e2148" textLength="46" lengthAdjust="spacingAndGlyphs">Station de bus</text><text x="25" y="572" font-size="11" fill="#14295a" textLength="72" lengthAdjust="spacingAndGlyphs">STANIČNÉ NÁM.</text><rect x="25" y="577" width="16" height="18" rx="2" fill="#14295a"/><text x="33.0" y="591" font-size="9" fill="#2c5088" text-anchor="middle" textLength="11" lengthAdjust="spacingAndGlyphs">23</text><text x="80" y="290" font-size="7" fill="#0e2148" textLength="20" lengthAdjust="spacingAndGlyphs" transform="rotate(-50 80 290)">Škola</text><text x="108" y="300" font-size="7" fill="#0e2148" textLength="24" lengthAdjust="spacingAndGlyphs" transform="rotate(-50 108 300)">School</text><text x="135" y="300" font-size="7" fill="#0e2148" textLength="32" lengthAdjust="spacingAndGlyphs" transform="rotate(-50 135 300)">Terminus</text><text x="70" y="430" font-size="7" fill="#0e2148" textLength="30" lengthAdjust="spacingAndGlyphs" transform="rotate(-50 70 430)">Námestie</text><text x="92" y="435" font-size="7" fill="#0e2148" textLength="16" lengthAdjust="spacingAndGlyphs" transform="rotate(-50 92 435)">Plac</text><text x="145" y="430" font-size="7" fill="#0e2148" textLength="20" lengthAdjust="spacingAndGlyphs" transform="rotate(-50 145 430)">Platz</text><text x="110" y="590" font-size="7" fill="#0e2148" textLength="48" lengthAdjust="spacingAndGlyphs" transform="rotate(-50 110 590)">Station de bus</text><text x="165" y="585" font-size="7" fill="#0e2148" textLength="40" lengthAdjust="spacingAndGlyphs" transform="rotate(-50 165 585)">Автовокзал</text></g><g transform="translate(1255 -599)"><path d="M0 63 H234 M0 73 H234" stroke="#0e2148" stroke-width="3.5" fill="none"/><path d="M20 0 V110 Q20 122 32 122 H234" stroke="#0e2148" stroke-width="3" fill="none"/><path d="M234 8 L165 120 Q160 128 168 138 L234 195" stroke="#0e2148" stroke-width="3" fill="none"/><path d="M0 148 Q40 148 50 135 Q60 128 75 128 H165" stroke="#0e2148" stroke-width="3.5" fill="none"/><path d="M0 154 H45 Q55 154 62 142 Q68 135 80 135 H165" stroke="#14295a" stroke-width="2.5" fill="none"/><path d="M86 155 V176 H234" stroke="#0e2148" stroke-width="2.5" fill="none"/><path d="M0 190 V945" stroke="#0e2148" stroke-width="0" fill="none"/><path d="M20 175 Q5 190 5 205 V240 Q5 255 20 265 V600" stroke="#0e2148" stroke-width="3" fill="none"/><path d="M80 211 H234 M80 244 H234 M80 211 Q75 211 75 220 V236 Q75 244 80 244" stroke="#14295a" stroke-width="2.5" fill="none"/><text x="32.6" y="17.5" font-size="12" fill="#0e2148" textLength="95.4" lengthAdjust="spacingAndGlyphs">ŽELEZNIČNÁ STANICA</text><text x="53" y="26" font-size="8" fill="#14295a" textLength="56" lengthAdjust="spacingAndGlyphs">RAILWAY STATION</text><text x="64" y="35" font-size="8" fill="#14295a" textLength="32" lengthAdjust="spacingAndGlyphs">BAHNHOF</text><rect x="137" y="6" width="21" height="19" rx="3" fill="none" stroke="#0e2148" stroke-width="1.5"/><circle cx="118" cy="28.6" r="6.5" fill="none" stroke="#0e2148" stroke-width="1.5"/><rect x="117" y="26" width="2" height="6" fill="#0e2148"/><text x="1" y="46" font-size="8" fill="#0e2148" textLength="16" lengthAdjust="spacingAndGlyphs">Stop</text><rect x="40.5" y="40" width="17.5" height="17" rx="2" fill="#0e2148"/><text x="49.25" y="53" font-size="10" fill="#2c5088" text-anchor="middle" textLength="12.5" lengthAdjust="spacingAndGlyphs">29A</text><circle cx="93" cy="47.6" r="9" fill="#14295a"/><text x="93" y="51.6" font-size="11" fill="#2c5090" text-anchor="middle">1</text><circle cx="115" cy="47.6" r="9" fill="#0e2148"/><text x="115" y="51.6" font-size="11" fill="#2c5090" text-anchor="middle">4</text><text x="26" y="79" font-size="8" fill="#0e2148" textLength="27" lengthAdjust="spacingAndGlyphs">Зупинка</text><text x="82" y="84" font-size="8" fill="#0e2148" textLength="27" lengthAdjust="spacingAndGlyphs">Zastávka</text><text x="5.6" y="111" font-size="8" fill="#0e2148" textLength="14.4" lengthAdjust="spacingAndGlyphs">Ulice</text><rect x="66" y="101.6" width="17" height="16" rx="2" fill="#14295a"/><text x="74.5" y="113.6" font-size="11" fill="#2c5088" text-anchor="middle" textLength="12" lengthAdjust="spacingAndGlyphs">24</text><rect x="23" y="94" width="13" height="7.6" rx="2" fill="#14295a"/><text x="182" y="47" font-size="8" fill="#0e2148" textLength="19" lengthAdjust="spacingAndGlyphs">Street</text><text x="191" y="84" font-size="8" fill="#0e2148" textLength="42" lengthAdjust="spacingAndGlyphs">Haltestelle</text><text x="183" y="95" font-size="8" fill="#0e2148" textLength="26" lengthAdjust="spacingAndGlyphs">Megálló</text><text x="171" y="119" font-size="8" fill="#0e2148" textLength="16" lengthAdjust="spacingAndGlyphs">Arrêt</text><text x="63" y="151" font-size="12" fill="#0e2148" textLength="55" lengthAdjust="spacingAndGlyphs">CITY CENTER</text><text x="129.4" y="146" font-size="8" fill="#0e2148" textLength="33.6" lengthAdjust="spacingAndGlyphs">Остановка</text><rect x="66" y="155.6" width="16" height="15.8" rx="2" fill="#0e2148"/><circle cx="99" cy="162" r="6" fill="none" stroke="#0e2148" stroke-width="1.3"/><text x="220" y="171" font-size="12" fill="#0e2148" textLength="16" lengthAdjust="spacingAndGlyphs">SQU</text><text x="55" y="203" font-size="12" fill="#0e2148" textLength="44" lengthAdjust="spacingAndGlyphs">CENTRUM</text><text x="113.6" y="205" font-size="8" fill="#14295a" textLength="35" lengthAdjust="spacingAndGlyphs">Downtown</text><text x="58" y="225" font-size="12" fill="#14295a" textLength="16" lengthAdjust="spacingAndGlyphs">72</text><rect x="58" y="232" width="16" height="16" rx="2" fill="#0e2148"/><text x="66.0" y="244" font-size="9" fill="#2c5088" text-anchor="middle" textLength="11" lengthAdjust="spacingAndGlyphs">N71</text><text x="12" y="190" font-size="8" fill="#0e2148" textLength="14" lengthAdjust="spacingAndGlyphs">Ulica</text><text x="29.4" y="227" font-size="8" fill="#0e2148" textLength="12" lengthAdjust="spacingAndGlyphs">Rue</text><text x="29.4" y="247" font-size="8" fill="#0e2148" textLength="14" lengthAdjust="spacingAndGlyphs">Utca</text><text x="29.4" y="268" font-size="8" fill="#0e2148" textLength="22" lengthAdjust="spacingAndGlyphs">Straße</text><rect x="207" y="254" width="21" height="21" rx="2" fill="none" stroke="#0e2148" stroke-width="1.5"/><path d="M217.5 258 V271 M212 266 Q217.5 273 223 266" stroke="#0e2148" stroke-width="1.5" fill="none"/><rect x="85" y="262" width="55.5" height="20" rx="3" fill="#0a1a40"/><rect x="89" y="266" width="47" height="8" fill="#2c5088"/><circle cx="98" cy="284" r="3.5" fill="#0a1a40"/><circle cx="128" cy="284" r="3.5" fill="#0a1a40"/><path d="M100 262 L125 250" stroke="#0e2148" stroke-width="1"/><text x="145" y="270" font-size="8" fill="#0e2148" textLength="26" lengthAdjust="spacingAndGlyphs" transform="rotate(-48 145 270)">Zentrum</text><text x="182" y="211" font-size="8" fill="#14295a" textLength="10" lengthAdjust="spacingAndGlyphs">72</text><text x="182" y="246" font-size="8" fill="#14295a" textLength="10" lengthAdjust="spacingAndGlyphs">72</text><path d="M21.6 290 V391" stroke="#0e2148" stroke-width="3" fill="none"/><path d="M72 307 H157" stroke="#0e2148" stroke-width="3" fill="none"/><path d="M83 307 Q75 307 70 315 L0 424" stroke="#0e2148" stroke-width="3" fill="none"/><path d="M0 364.6 H234 M0 374 H234" stroke="#0e2148" stroke-width="3.5" fill="none"/><path d="M144 374 Q164 380 164 400 V532 Q164 540 156 540" stroke="#0e2148" stroke-width="3" fill="none"/><path d="M0 445.6 H234" stroke="#0e2148" stroke-width="3.5" fill="none"/><path d="M0 405 L118 530 Q126 539 140 539 H234 M0 420 L112 540 Q120 548 134 548 H234" stroke="#0e2148" stroke-width="3" fill="none"/><path d="M0 510 H90 M0 544.6 H90" stroke="#14295a" stroke-width="2.5" fill="none"/><circle cx="171" cy="525" r="10" fill="none" stroke="#0e2148" stroke-width="3"/><text x="166" y="312" font-size="11" fill="#0e2148" textLength="43" lengthAdjust="spacingAndGlyphs">KONEČNÁ</text><rect x="166" y="316" width="16" height="16" rx="2" fill="#14295a"/><text x="174.0" y="328" font-size="8" fill="#2c5088" text-anchor="middle" textLength="11" lengthAdjust="spacingAndGlyphs">212</text><circle cx="218.5" cy="344" r="9" fill="#0e2148"/><text x="218.5" y="348" font-size="11" fill="#2c5090" text-anchor="middle">F</text><text x="28" y="350" font-size="7" fill="#0e2148" textLength="19" lengthAdjust="spacingAndGlyphs">Street</text><text x="144" y="358" font-size="7" fill="#0e2148" textLength="22" lengthAdjust="spacingAndGlyphs">Площа</text><text x="38" y="386" font-size="7" fill="#0e2148" textLength="34" lengthAdjust="spacingAndGlyphs">Haltestelle</text><text x="31" y="397" font-size="7" fill="#0e2148" textLength="25" lengthAdjust="spacingAndGlyphs">Megálló</text><text x="16" y="420" font-size="7" fill="#0e2148" textLength="16" lengthAdjust="spacingAndGlyphs">Arrêt</text><rect x="169" y="379" width="20" height="20" rx="2" fill="none" stroke="#0e2148" stroke-width="1.5"/><text x="168" y="436" font-size="7" fill="#0e2148" textLength="17" lengthAdjust="spacingAndGlyphs">Place</text><text x="70" y="473" font-size="7" fill="#14295a" textLength="25" lengthAdjust="spacingAndGlyphs">Náměstí</text><text x="167" y="470" font-size="7" fill="#0e2148" textLength="63" lengthAdjust="spacingAndGlyphs">Autobusové nádraží</text><rect x="171" y="474" width="16" height="18" rx="2" fill="#0e2148"/><text x="179.0" y="488" font-size="9" fill="#2c5088" text-anchor="middle" textLength="11" lengthAdjust="spacingAndGlyphs">129</text><circle cx="180" cy="503" r="9" fill="#0e2148"/><text x="180" y="507" font-size="11" fill="#2c5090" text-anchor="middle">3</text><text x="193" y="505" font-size="11" fill="#0e2148" textLength="41" lengthAdjust="spacingAndGlyphs">AUTOBUS</text><text x="203" y="518" font-size="11" fill="#0e2148" textLength="31" lengthAdjust="spacingAndGlyphs">STANIC</text><text x="205" y="528" font-size="7" fill="#14295a" textLength="29" lengthAdjust="spacingAndGlyphs">BUS STAT</text><text x="205" y="536" font-size="7" fill="#14295a" textLength="29" lengthAdjust="spacingAndGlyphs">BUSBAHN</text><text x="94" y="498" font-size="7" fill="#0e2148" textLength="22" lengthAdjust="spacingAndGlyphs">Square</text><text x="114" y="511" font-size="7" fill="#0e2148" textLength="46" lengthAdjust="spacingAndGlyphs">Station de bus</text><text x="25" y="572" font-size="11" fill="#14295a" textLength="72" lengthAdjust="spacingAndGlyphs">STANIČNÉ NÁM.</text><rect x="25" y="577" width="16" height="18" rx="2" fill="#14295a"/><text x="33.0" y="591" font-size="9" fill="#2c5088" text-anchor="middle" textLength="11" lengthAdjust="spacingAndGlyphs">23</text><text x="80" y="290" font-size="7" fill="#0e2148" textLength="20" lengthAdjust="spacingAndGlyphs" transform="rotate(-50 80 290)">Škola</text><text x="108" y="300" font-size="7" fill="#0e2148" textLength="24" lengthAdjust="spacingAndGlyphs" transform="rotate(-50 108 300)">School</text><text x="135" y="300" font-size="7" fill="#0e2148" textLength="32" lengthAdjust="spacingAndGlyphs" transform="rotate(-50 135 300)">Terminus</text><text x="70" y="430" font-size="7" fill="#0e2148" textLength="30" lengthAdjust="spacingAndGlyphs" transform="rotate(-50 70 430)">Námestie</text><text x="92" y="435" font-size="7" fill="#0e2148" textLength="16" lengthAdjust="spacingAndGlyphs" transform="rotate(-50 92 435)">Plac</text><text x="145" y="430" font-size="7" fill="#0e2148" textLength="20" lengthAdjust="spacingAndGlyphs" transform="rotate(-50 145 430)">Platz</text><text x="110" y="590" font-size="7" fill="#0e2148" textLength="48" lengthAdjust="spacingAndGlyphs" transform="rotate(-50 110 590)">Station de bus</text><text x="165" y="585" font-size="7" fill="#0e2148" textLength="40" lengthAdjust="spacingAndGlyphs" transform="rotate(-50 165 585)">Автовокзал</text></g></g><rect x="215" y="0" width="20" height="945" fill="url(#shl)"/><rect x="1255" y="0" width="20" height="945" fill="url(#shr)"/></svg>
<div id="topbar"></div>
<div id="page"></div>
<svg class="abs" style="left:244px;top:36px" width="72" height="48" viewBox="0 0 72 48">
<defs>
<linearGradient id="lgb" x1="0" y1="0" x2="1" y2="1"><stop offset="0" stop-color="#6a7c98"/><stop offset="0.5" stop-color="#4f617e"/><stop offset="1" stop-color="#3a4a66"/></linearGradient>
<linearGradient id="lgr" x1="0" y1="0" x2="0" y2="1"><stop offset="0" stop-color="#ff5a5a"/><stop offset="0.55" stop-color="#f23a3a"/><stop offset="0.56" stop-color="#e50d12"/><stop offset="1" stop-color="#d40a10"/></linearGradient>
</defs>
<path d="M43.7 16.8 C35 11 22 5.5 13 4.8 C6 4.5 3 8 3.6 11.5 C5 19 12 31 28 40 C34 43 40 45 43.7 45.5 C36 42 25 36 19 29 C13.5 22 12.5 15 16 11 C20 8.5 30 11 43.7 16.8Z" fill="url(#lgb)"/>
<path d="M27.4 5 C40 8 55 15 63 24 C69 30 70 36 67.5 40 C65 43 58 44 50 42.5 C46 41.8 43 40.5 40.5 39 L42.5 37.5 C46 38.3 51 38.2 54.5 37.5 C58 36.5 58.5 33 57 28.5 C54 20 42 11 27.4 5Z" fill="url(#lgr)"/>
<path d="M38 33 L43.5 35 L44 39 L41 39.5Z" fill="#d80a10"/>
<ellipse cx="33.5" cy="29.5" rx="10.3" ry="6.6" transform="rotate(25 33.5 29.5)" fill="url(#lgr)"/>
</svg>

<div class="t" style="left:320px;top:47.6px;font-size:27.5px;font-weight:bold;transform-origin:0 0;transform:scaleX(0.83);letter-spacing:-0.2px;-webkit-text-stroke:0.4px currentColor"><span style="color:#4d6385;-webkit-text-stroke:0.2px #4d6385">i</span><span style="color:#e8141b;-webkit-text-stroke:0.2px #e8141b">mhd</span><span style="color:#4d6385;-webkit-text-stroke:0.2px #4d6385">.sk</span></div>
<svg class="abs" style="left:320px;top:90px" width="90" height="26" viewBox="0 0 90 26">
<path d="M3 22.5 C20 19 45 17.5 70 19.5 C50 19 25 20.5 3 24Z" fill="#e0161c"/>
<path d="M5 3.5 C10 2 18 2.5 24 3.5 L23.5 6 L8 20.5 L16 20 L14 22.5 L2.5 23.5 L3.5 21 L18 7 C13 6.5 8 6.5 5 7Z" fill="#e0161c"/>
</svg>
<div class="t" style="left:340px;top:91px;font-size:16px;font-weight:bold;font-style:italic;color:#111;letter-spacing:0.3px">oznam</div>
<div class="t" style="left:391px;top:97px;font-size:10px;font-weight:bold;color:#111">.sk</div>

<svg class="abs" style="left:425px;top:55px" width="505" height="70" viewBox="0 0 505 70">
<defs>
<clipPath id="bc"><rect x="0" y="0" width="505" height="70" rx="3"/></clipPath>
<filter id="tsh" x="-10%" y="-10%" width="120%" height="130%"><feDropShadow dx="1" dy="1.5" stdDeviation="1" flood-color="#000" flood-opacity="0.9"/></filter>
<filter id="blur1"><feGaussianBlur stdDeviation="0.6"/></filter>
<linearGradient id="bsg" x1="0" y1="0" x2="1" y2="0"><stop offset="0" stop-color="#2a9a4e"/><stop offset="1" stop-color="#22803f"/></linearGradient>
</defs>
<g clip-path="url(#bc)">
<rect width="505" height="70" fill="#5e5e5e"/>
<g filter="url(#blur1)">
<!-- sidewalk / building left -->
<path d="M0 0 H26 V40 L0 48Z" fill="#8e8e8e"/>
<path d="M0 40 L26 34 L24 70 H0Z" fill="#a2a2a2"/>
<path d="M2 62 L24 44 L24 50 L4 68Z" fill="#5a5a5a"/>
<rect x="12" y="0" width="10" height="32" fill="#3a3636"/>
<rect x="7.5" y="0" width="4" height="35" fill="#dcdcdc"/>
<rect x="20" y="4" width="4" height="30" fill="#b8a060"/>
<!-- road near bus -->
<path d="M24 66 L80 64 L145 3 L145 0 H505 V70 H24Z" fill="#606060"/>
<!-- bus side -->
<path d="M79 1 H144 L143 6 L84 65 L79 65Z" fill="url(#bsg)"/>
<path d="M80 4 L113 0 L113 14 L85 36 L80 38Z" fill="#4b4a40"/>
<path d="M82 6 L88 5 L88 30 L82 34Z" fill="#e8e8e8" opacity="0.8"/>
<path d="M92 4 L112 1 L112 10 L92 22Z" fill="#8a8070"/>
<rect x="123" y="0" width="6" height="16" fill="#c8c0a0"/>
<ellipse cx="94.5" cy="43" rx="2.5" ry="8" fill="#3a3a3a"/>
<ellipse cx="118" cy="18" rx="2.5" ry="8" fill="#3a3a3a"/>
<path d="M86 62 L143 6 L145 8 L88 65Z" fill="#3a3a3a" opacity="0.7"/>
<!-- bus front -->
<rect x="23.7" y="0.5" width="56" height="64" rx="2" fill="#2fa456"/>
<rect x="27.2" y="4.5" width="46" height="8.5" fill="#f0f0ee"/>
<rect x="40" y="6.6" width="6" height="4.4" fill="#c83030"/>
<rect x="46" y="6.6" width="13" height="4.4" fill="#e0c040"/>
<rect x="24.7" y="15" width="55" height="4" fill="#eeeeee"/>
<rect x="25.5" y="19" width="53" height="21.5" fill="#d2c396"/>
<rect x="30" y="21" width="3" height="18" fill="#f2e8c8"/>
<rect x="37" y="21" width="3" height="18" fill="#a89868"/>
<rect x="51" y="19" width="1.5" height="22" fill="#2a2a2a"/>
<rect x="58" y="22" width="20" height="18" fill="#6a6a5e"/>
<rect x="65" y="22" width="12" height="9" fill="#c8d8f0"/>
<rect x="25" y="40" width="55" height="1.5" fill="#1e7a3c"/>
<rect x="25" y="49.5" width="7" height="4" rx="1.5" fill="#f4f4f4"/>
<rect x="70" y="49" width="8" height="4.4" rx="1.5" fill="#f4f4f4"/>
<rect x="26" y="57" width="5" height="2.5" fill="#e8e8e8"/>
<rect x="71.5" y="57" width="4.5" height="2.5" fill="#e8e8e8"/>
<rect x="45" y="56.4" width="12.5" height="3.6" fill="#e8e8e8"/>
<rect x="36" y="46.4" width="10" height="2" fill="#c8d8c8"/>
<rect x="56.5" y="46.4" width="9" height="3.6" fill="#e0d040"/>
<rect x="23.7" y="63" width="56" height="3" fill="#1a5a2c"/>
<!-- car B (gray, left) -->
<path d="M123 23 H170 V70 H123Z" fill="#9c9c9c"/>
<rect x="132" y="34" width="30" height="15" fill="#2a2a2a"/>
<rect x="135" y="37" width="20" height="8" fill="#9a9a9a"/>
<rect x="125" y="60" width="8" height="6" fill="#eeeeee"/>
<rect x="121" y="38" width="4" height="24" fill="#222"/>
<!-- car A (light, top) -->
<path d="M161 0 H198 V22 Q196 29 190 29 H168 Q162 29 161 22Z" fill="#bcbcbc"/>
<rect x="167" y="1" width="24" height="9" fill="#2e2e2e"/>
<rect x="170" y="4" width="16" height="4" fill="#d8d8d8"/>
<rect x="163" y="18" width="8" height="5" fill="#f4f4f4"/>
<rect x="181" y="18" width="8" height="5" fill="#f4f4f4"/>
<rect x="169" y="26" width="20" height="2" fill="#3a3a3a"/>
<!-- lane dashes -->
<path d="M200 29 L207 17 L208 18 L201 30Z" fill="#cccccc"/>
<path d="M184 69 L188 60 L189.5 60.5 L185.5 69Z" fill="#bbbbbb"/>
<!-- car C (center) -->
<path d="M207 27 H217 V49 H207Z" fill="#2a2a2a"/>
<path d="M216 13 H250 L252 43 Q250 49 246 49 H220 Q215 49 215 43Z" fill="#8c8c8c"/>
<rect x="222.5" y="13" width="24" height="6" fill="#5a5a5a"/>
<rect x="219.5" y="19" width="28.5" height="10" fill="#2e2e2e"/>
<rect x="238" y="22" width="8" height="6" fill="#d8d8d8"/>
<rect x="215.5" y="41.3" width="8" height="4" fill="#f0f0f0"/>
<rect x="238.7" y="41.3" width="8" height="4" fill="#f0f0f0"/>
<!-- car D (dark bottom) -->
<path d="M205 70 L210 50 H250 L254 70Z" fill="#3e3e3e"/>
<path d="M212 52 H248 M212 56 H248" stroke="#6a6a6a" stroke-width="1"/>
<rect x="239" y="0" width="26" height="3.5" fill="#e0e0e0"/>
<!-- road edge lines -->
<rect x="268" y="0" width="4" height="70" fill="#d8d8d8"/>
<rect x="274" y="0" width="3" height="70" fill="#bdbdbd"/>
<!-- right lane -->
<path d="M278 9 L295 9 L295 59 L278 59Z" fill="#2e2e2e"/>
<rect x="286" y="3" width="10" height="25" fill="#d8d8d8"/>
<path d="M291 0.5 H317 V18 Q316 21 312 21 H296 Q292 21 291 18Z" fill="#dadada"/>
<rect x="293" y="7" width="21" height="7" fill="#3a3a3a"/>
<path d="M294 22 H331 V56 Q330 58 326 58 H298 Q294 58 294 55Z" fill="#cdcdcd"/>
<rect x="294" y="22" width="37" height="7" fill="#b4b4b4"/>
<rect x="299" y="28" width="28" height="11" fill="#333333"/>
<rect x="296" y="45" width="9" height="4" fill="#555"/>
<rect x="320" y="45" width="9" height="4" fill="#555"/>
<path d="M301 58 H333 V70 H301Z" fill="#2e2e2e"/>
<path d="M325 0 H347 L340 16 L328 14Z" fill="#262626"/>
<path d="M345 28 L365 28 L365 50 L345 48Z" fill="#2a2a2a"/>
<rect x="347" y="0.5" width="26" height="9.5" rx="2" fill="#dedede"/>
<path d="M360 24 H402 V47 H360Z" fill="#4a4a4a"/>
<rect x="368" y="27" width="26" height="9" fill="#777"/>
<rect x="381" y="39" width="12" height="3" fill="#e8e8e8"/>
<!-- tracks -->
<path d="M405 0 H505 V70 H430Z" fill="#777777"/>
<path d="M395 0 L470 70 M410 0 L490 70 M425 0 L505 72 M445 0 L505 55 M462 0 L505 40 M480 0 L505 25" stroke="#3e3e3e" stroke-width="1.6" fill="none"/>
<path d="M400 0 L478 70 M418 0 L498 70 M452 0 L505 48 M470 0 L505 33" stroke="#a0a0a0" stroke-width="1" fill="none"/>
</g>
</g>
<g filter="url(#tsh)" font-family="Liberation Sans" font-weight="bold" font-size="17.5" fill="#62c45c" text-anchor="end">
<text x="496" y="21.7">Životné prostredie</text>
<text x="496" y="42.2">vám ďakuje,</text>
<text x="496" y="61.2">že jazdíte s MHD!</text>
</g>
</svg>

<div class="t" style="left:441px;top:23.18px;font-size:14px;color:#6e6e6e;">Slovensky</div>
<div class="t" style="left:518px;top:24.02px;font-size:13px;color:#34489a;">English</div>
<div class="t" style="left:570px;top:24.02px;font-size:13px;font-weight:bold;color:#222;">BETA</div>
<div class="t" style="left:769px;top:24.02px;font-size:13px;color:#34489a;">Registrácia</div>
<div class="t" style="left:848px;top:24.02px;font-size:13px;color:#34489a;">Prihlásenie</div>
<svg class="abs" style="left:917px;top:27px" width="5" height="7"><path d="M0 0 L3.5 3 L0 6Z" fill="#cc0000"/></svg>
<div class="abs" style="left:940px;top:5px;width:305px;height:40px;background:#0049a8;border-radius:0 0 4px 4px"></div>
<div class="t" style="left:955px;top:19.64px;font-size:17px;font-weight:bold;color:#fff;text-shadow:1px 1px 1px #1a1a1a;">Liptovský Mikuláš</div>
<div class="t" style="left:1157px;top:22.87px;font-size:12px;font-weight:bold;color:#fff;">Iné mestá</div>
<svg class="abs" style="left:1218px;top:23.5px" width="12" height="9"><path d="M1.5 1.5 L6 6 L10.5 1.5" stroke="#fff" stroke-width="2.2" fill="none"/></svg>
<div class="abs" style="left:940px;top:55px;width:305px;height:70px;background:#d5daec;border-radius:4px;overflow:hidden"></div>
<svg class="abs" style="left:940px;top:55px" width="80" height="70"><g fill="#ffffff" fill-opacity="0.38"><path d="M0.4 24.4 L14.9 21.1 L17.3 40.4 L6 43.7 L0.4 41.2Z"/><path d="M35 16.3 L57.5 9.1 L70.4 16.3 L64 27.6 L62.4 48.5 L45.5 53.7 L41.4 40.4Z"/><path d="M20.5 17 L28.5 15 L46 70 L35 70Z"/><path d="M18.5 14 A5 4.5 -15 0 1 29 10.5 Z"/></g></svg>
<div class="t" style="left:955px;top:84.49px;font-size:16px;font-weight:bold;color:#404048;letter-spacing:2.1px;-webkit-text-stroke:0.6px #404048;">Hľadaj:</div>
<div class="abs" style="left:1033px;top:75px;width:162px;height:32px;background:#f5f6fb;border:1px solid #9a9ca6;border-radius:4px"></div>
<div class="t" style="left:1039px;top:84.68px;font-size:14px;font-weight:bold;color:#c6c6c6;">...linku, zastávku...</div>
<div class="abs" style="left:1200px;top:75px;width:32px;height:32px;background:linear-gradient(#aab0bd,#848997);border:1px solid #7d818c;border-radius:5px"></div>
<svg class="abs" style="left:1200px;top:75px" width="32" height="32"><circle cx="14.5" cy="15" r="5.2" stroke="#fff" stroke-width="2" fill="none"/><path d="M18 18.8 L22.3 23" stroke="#fff" stroke-width="2.6"/></svg>
<div class="abs" style="left:245px;top:140px;width:1000px;height:1px;background:#dfe3ee"></div>
<div class="abs" style="left:245px;top:156px;width:170px;height:300px;background:#dde1f0;border-radius:4px"></div>
<svg class="abs" style="left:260px;top:181px" width="4" height="6"><path d="M0 0 L3.5 3 L0 6Z" fill="#cc0000"/></svg>
<div class="t" style="left:270px;top:178.18px;font-size:14px;color:#34489a;">Aktuality</div>
<svg class="abs" style="left:260px;top:208px" width="4" height="6"><path d="M0 0 L3.5 3 L0 6Z" fill="#cc0000"/></svg>
<div class="t" style="left:270px;top:205.18px;font-size:14px;color:#34489a;">Cestovanie</div>
<svg class="abs" style="left:260px;top:235px" width="4" height="6"><path d="M0 0 L3.5 3 L0 6Z" fill="#cc0000"/></svg>
<div class="t" style="left:270px;top:232.18px;font-size:14px;color:#34489a;">Cestovné lístky</div>
<svg class="abs" style="left:260px;top:262px" width="4" height="6"><path d="M0 0 L3.5 3 L0 6Z" fill="#cc0000"/></svg>
<div class="t" style="left:270px;top:259.18px;font-size:14px;color:#34489a;">Užitočné informácie</div>
<svg class="abs" style="left:260px;top:289px" width="4" height="6"><path d="M0 0 L3.5 3 L0 6Z" fill="#cc0000"/></svg>
<div class="t" style="left:270px;top:286.18px;font-size:14px;color:#34489a;">Fotky a obrázky</div>
<svg class="abs" style="left:260px;top:316px" width="4" height="6"><path d="M0 0 L3.5 3 L0 6Z" fill="#cc0000"/></svg>
<div class="t" style="left:270px;top:313.18px;font-size:14px;color:#34489a;">Diskusia</div>
<div class="abs" style="left:245px;top:333px;width:170px;height:28px;background:#d5daec"></div>
<svg class="abs" style="left:258px;top:345px" width="6" height="4"><path d="M0 0 L5.5 0 L2.75 3.5Z" fill="#cc0000"/></svg>
<div class="t" style="left:270px;top:340.18px;font-size:14px;font-weight:bold;color:#1e2a5a;">Vozidlá</div>
<div class="abs" style="left:245px;top:361px;width:170px;height:79px;background:#eff0f7"></div>
<div class="t" style="left:260px;top:370.52px;font-size:13px;color:#34489a;">Autobusy MHD</div>
<div class="abs" style="left:245px;top:388px;width:170px;height:1px;background:#cfd5ea"></div>
<div class="t" style="left:260px;top:393.52px;font-size:13px;color:#34489a;">Vyhľadávanie</div>
<div class="abs" style="left:245px;top:411px;width:170px;height:1px;background:#cfd5ea"></div>
<div class="t" style="left:260px;top:416.52px;font-size:13px;color:#34489a;">Evidenčný stav</div>
<div class="abs" style="left:245px;top:434px;width:170px;height:1px;background:#cfd5ea"></div>
<div class="abs" style="left:245px;top:440px;width:170px;height:1px;background:#cfd5ea"></div>
<div class="t" style="left:255px;top:484.18px;font-size:14px;font-weight:bold;color:#2a2a3a;letter-spacing:0.25px;">Nájdi na mape</div>
<div class="abs" style="left:255px;top:499px;width:150px;height:3px;background:#ffcc00"></div>
<div class="abs" style="left:255px;top:514px;width:111px;height:23px;background:#fff;border:1px solid #9a9ca6;border-radius:3px"></div>
<div class="t" style="left:258px;top:518.68px;font-size:14px;font-weight:bold;color:#808080;">Ulicu, mesto, ...</div>
<div class="abs" style="left:370px;top:507px;width:32px;height:30px;background:linear-gradient(#8e9199,#4b4e56);border:1px solid #3e4148;border-radius:5px"></div>
<svg class="abs" style="left:370px;top:507px" width="32" height="30"><circle cx="14.5" cy="13.5" r="5" stroke="#fff" stroke-width="2" fill="none"/><path d="M18 17.3 L22 21.3" stroke="#fff" stroke-width="2.6"/></svg>
<svg class="abs" style="left:255px;top:543px" width="150" height="107" viewBox="0 0 150 107">
<defs><radialGradient id="cmp" cx="0.4" cy="0.35" r="0.7"><stop offset="0" stop-color="#f05a4a"/><stop offset="1" stop-color="#b81c18"/></radialGradient></defs>
<rect width="150" height="107" fill="#e9e6dd"/>
<path d="M0 78 L34 92 L34 107 H0Z" fill="#dfe8d6"/>
<path d="M98 72 L114 78 L122 98 L150 100 L150 72 L125 76 L120 80Z" fill="#dde3ea"/>
<path d="M1.3 63.6 C15 66 25 67.5 33.6 69.3 C42 71 48 73 53.2 74 C62 75 72 75.5 79.7 75.7 C88 76.5 96 77.5 102.8 79.7 C108 82 112 84 114.3 86.6 C118 90 121 95 123.6 99.3 L125.9 107 L116.6 107 C114 99 112 95 109.7 91.3 C106 88 103 86 99.3 84.3 C93 82 86 80.5 79.7 80.3 C70 80 60 80 53.2 79.7 C45 79 40 78.5 33.6 77.4 C25 75 15 72 1.3 70.5Z" fill="#a4bde0"/>
<path d="M98 71 L114 78 L113 80 L97 73Z M100 75 L116 82 L115 84 L99 77Z" fill="#a4bde0"/>
<path d="M122 80 L140 106 L136 106 L119 82Z M130 78 L150 100 L150 104 L127 80Z M138 76 L150 88 L150 91 L136 78Z" fill="#a9c0e0"/>
<path d="M23 23 L33 24 L36 39.4 L30 39 Z" fill="#c4dcb0"/>
<path d="M54 82 L72.8 83 L70 91.3 L57 90Z" fill="#c4dcb0"/>
<g fill="none" stroke-linecap="round" stroke-linejoin="round">
<g stroke="#dccb6a" stroke-width="2.2">
<path d="M2.5 1.3 C6 5 8 8 10.5 9.4 C20 14 28 16 33.6 17.5 C42 20 48 22 52 23.2 C54 28 55 33 55.5 37 C54 48 52 56 52 63.6 L53.2 105"/>
<path d="M55.5 37 C63 35 70 33 77.4 31.9 C88 30 96 29 102.8 27.8 C108 26 111 24 114.3 22 C124 15 130 10 137.4 5.9"/>
<path d="M90 1.3 C89 12 88 24 87.8 36 C87 45 86 52 85.5 59 C84 63 82 66 79.7 68 C70 72 60 74 53.2 74 C40 73 25 68 10.5 61.3"/>
<path d="M110.9 1.3 C102 14 94 26 86.6 36 C80 39 74 41 68.2 42.8 C62 48 57 54 53.2 59"/>
<path d="M91.3 4.8 C100 10 107 16 112 22 C118 32 122 42 125.9 52 C127 56 128.5 60 129.3 64.7"/>
<path d="M86.6 59 C100 57 112 54 125.9 52 C135 51 142 50 148.9 49.7"/>
<path d="M92 62 C93 75 93.5 90 93.6 105"/>
<path d="M133 14 L148.9 15"/>
</g>
<g stroke="#f6e37c" stroke-width="1.3">
<path d="M2.5 1.3 C6 5 8 8 10.5 9.4 C20 14 28 16 33.6 17.5 C42 20 48 22 52 23.2 C54 28 55 33 55.5 37 C54 48 52 56 52 63.6 L53.2 105"/>
<path d="M55.5 37 C63 35 70 33 77.4 31.9 C88 30 96 29 102.8 27.8 C108 26 111 24 114.3 22 C124 15 130 10 137.4 5.9"/>
<path d="M90 1.3 C89 12 88 24 87.8 36 C87 45 86 52 85.5 59 C84 63 82 66 79.7 68 C70 72 60 74 53.2 74 C40 73 25 68 10.5 61.3"/>
<path d="M110.9 1.3 C102 14 94 26 86.6 36 C80 39 74 41 68.2 42.8 C62 48 57 54 53.2 59"/>
<path d="M91.3 4.8 C100 10 107 16 112 22 C118 32 122 42 125.9 52 C127 56 128.5 60 129.3 64.7"/>
<path d="M86.6 59 C100 57 112 54 125.9 52 C135 51 142 50 148.9 49.7"/>
<path d="M92 62 C93 75 93.5 90 93.6 105"/>
<path d="M133 14 L148.9 15"/>
</g>
<path d="M7 14 C5 40 4.5 75 4.8 103 C10 100 20 96 31.3 93.6 C45 94 58 95 70.5 95.3 C82 95.5 94 95 102.8 94.7 C110 88 116 78 122.4 72.8 C130 70 140 69 148.9 68.8" stroke="#e8b040" stroke-width="2.8"/>
<path d="M7 14 C5 40 4.5 75 4.8 103 C10 100 20 96 31.3 93.6 C45 94 58 95 70.5 95.3 C82 95.5 94 95 102.8 94.7 C110 88 116 78 122.4 72.8 C130 70 140 69 148.9 68.8" stroke="#f7c85a" stroke-width="1.6"/>
</g>
<g fill="#7088d8"><rect x="47.4" y="22" width="5.8" height="3.5"/><rect x="76" y="30" width="6" height="3.6"/><rect x="116" y="16.9" width="6.4" height="3.4"/><rect x="137.4" y="3" width="4.6" height="3"/><rect x="126.4" y="51" width="5.2" height="3.4"/><rect x="126.4" y="60.7" width="5.2" height="2.9"/><rect x="16.3" y="64.7" width="4.7" height="3.5"/></g>
<g fill="#5fb060"><rect x="4.8" y="47.4" width="5.7" height="2.9"/><rect x="31.9" y="93" width="6.3" height="2.9"/><rect x="41" y="92.4" width="6.4" height="2.9"/><rect x="78.6" y="94" width="6.4" height="3.6"/><rect x="121" y="71" width="6.6" height="3"/><rect x="133" y="68.2" width="6.7" height="2.8"/></g>
<g fill="#e06070"><rect x="2.5" y="94" width="5.1" height="3"/><rect x="20.9" y="98" width="5.1" height="3.6"/><rect x="71" y="94" width="5.3" height="3.6"/><rect x="142.6" y="68.2" width="5.7" height="2.8"/></g>
<text x="48" y="54" font-family="Liberation Sans" font-size="4" fill="#555">Bratislava</text>
<circle cx="19.2" cy="82" r="12" fill="url(#cmp)"/>
<circle cx="19.2" cy="82" r="5.2" fill="#e6e4de"/>
<path d="M5.9 100.5 L19.5 78 L23.5 80.5Z" fill="#ececec" stroke="#bdbdbd" stroke-width="0.4"/>
<path d="M32.4 64.2 L19.5 78 L23.5 80.5Z" fill="#e8201c"/>
<rect x="0.5" y="0.5" width="149" height="106" fill="none" stroke="#d0d6ea"/>
</svg>

<div class="t" style="left:441px;top:162.64px;font-size:17px;font-weight:bold;color:#333;">Súčasný evidenčný stav vozidiel</div>
<div class="abs" style="left:440px;top:181px;width:790px;height:3px;background:#ffcc00"></div>
<div class="abs" style="left:440px;top:189px;width:790px;height:435px;border:1px solid #cdd4ea;border-radius:3px"></div>
<div class="abs" style="left:456px;top:205px;width:758px;height:28px;background:#ffcc00;border-bottom:1px solid #d4a800"></div>
<div class="t" style="left:461px;top:212.18px;font-size:14px;font-weight:bold;color:#5b4b0b;">Autobusy</div>
<div class="abs" style="left:456px;top:233px;width:758px;height:27px;background:#d5daec;border-bottom:1px solid #9ca0ac"></div>
<div class="t" style="left:461px;top:240.02px;font-size:13px;font-weight:bold;color:#4a4f5f;">Typ</div>
<div class="t" style="left:598px;top:240.02px;font-size:13px;font-weight:bold;color:#4a4f5f;">Rok výroby</div>
<div class="t" style="left:683px;top:240.02px;font-size:13px;font-weight:bold;color:#4a4f5f;">Vek</div>
<div class="t" style="left:744px;top:240.02px;font-size:13px;font-weight:bold;color:#4a4f5f;">#</div>
<div class="t" style="left:963px;width:100px;text-align:right;top:240.02px;font-size:13px;font-weight:bold;color:#4a4f5f">Počet</div>
<div class="t" style="left:1075px;top:240.02px;font-size:13px;font-weight:bold;color:#4a4f5f;">Poznámky</div>
<div class="abs" style="left:456px;top:260px;width:758px;height:26px;background:#f0f1f7"></div>
<div class="t" style="left:461px;top:267.02px;font-size:13px;color:#222;">Karosa C 934E</div>
<div class="t" style="left:598px;top:267.02px;font-size:13px;color:#222;"></div>
<div class="t" style="left:683px;top:267.02px;font-size:13px;color:#222;">(?)</div>
<div class="t" style="left:744px;top:267.02px;font-size:13px;color:#222;">LM-020AE</div>
<div class="t" style="left:963px;width:101px;text-align:right;top:267.02px;font-size:13px;color:#222">1</div>
<div class="t" style="left:1075px;top:267.02px;font-size:13px;color:#222;"></div>
<div class="t" style="left:461px;top:293.02px;font-size:13px;color:#222;">Karosa B 732.20</div>
<div class="t" style="left:598px;top:293.02px;font-size:13px;color:#222;"></div>
<div class="t" style="left:683px;top:293.02px;font-size:13px;color:#222;">(?)</div>
<div class="t" style="left:744px;top:293.02px;font-size:13px;color:#222;">LM-332AM, LM-344AJ, LM-870AI</div>
<div class="t" style="left:963px;width:101px;text-align:right;top:293.02px;font-size:13px;color:#222">3</div>
<div class="t" style="left:1075px;top:293.02px;font-size:13px;color:#222;"></div>
<div class="abs" style="left:456px;top:312px;width:758px;height:26px;background:#f0f1f7"></div>
<div class="t" style="left:461px;top:319.02px;font-size:13px;color:#222;">Karosa B 732</div>
<div class="t" style="left:598px;top:319.02px;font-size:13px;color:#222;"></div>
<div class="t" style="left:683px;top:319.02px;font-size:13px;color:#222;">(?)</div>
<div class="t" style="left:744px;top:319.02px;font-size:13px;color:#222;">LM-345AJ, LM-547AL, LM-672AI, RK-593AS</div>
<div class="t" style="left:963px;width:101px;text-align:right;top:319.02px;font-size:13px;color:#222">4</div>
<div class="t" style="left:1075px;top:319.02px;font-size:13px;color:#222;"></div>
<div class="t" style="left:461px;top:345.02px;font-size:13px;color:#222;">Karosa B 732</div>
<div class="t" style="left:598px;top:345.02px;font-size:13px;color:#222;">1988</div>
<div class="t" style="left:683px;top:345.02px;font-size:13px;color:#222;">32 rokov</div>
<div class="t" style="left:744px;top:345.02px;font-size:13px;color:#222;">LM-106AN, LM-671AU</div>
<div class="t" style="left:963px;width:101px;text-align:right;top:345.02px;font-size:13px;color:#222">2</div>
<div class="t" style="left:1075px;top:345.02px;font-size:13px;color:#222;"></div>
<div class="abs" style="left:456px;top:364px;width:758px;height:26px;background:#f0f1f7"></div>
<div class="t" style="left:461px;top:371.02px;font-size:13px;color:#222;">Karosa B 952E.1716</div>
<div class="t" style="left:598px;top:371.02px;font-size:13px;color:#222;">2005</div>
<div class="t" style="left:683px;top:371.02px;font-size:13px;color:#222;">15 rokov</div>
<div class="t" style="left:744px;top:371.02px;font-size:13px;color:#222;">RK-641AR, RK-873AS</div>
<div class="t" style="left:963px;width:101px;text-align:right;top:371.02px;font-size:13px;color:#222">2</div>
<div class="t" style="left:1075px;top:371.02px;font-size:13px;color:#222;"></div>
<div class="t" style="left:461px;top:397.02px;font-size:13px;color:#222;">Karosa B 952E.1716</div>
<div class="t" style="left:598px;top:397.02px;font-size:13px;color:#222;">2006</div>
<div class="t" style="left:683px;top:397.02px;font-size:13px;color:#222;">14 rokov</div>
<div class="t" style="left:744px;top:397.02px;font-size:13px;color:#222;">RK-997AU, RK-998AU</div>
<div class="t" style="left:963px;width:101px;text-align:right;top:397.02px;font-size:13px;color:#222">2</div>
<div class="t" style="left:1075px;top:397.02px;font-size:13px;color:#222;"></div>
<div class="abs" style="left:456px;top:416px;width:758px;height:26px;background:#f0f1f7"></div>
<div class="t" style="left:461px;top:423.02px;font-size:13px;color:#222;">SOR NB 12 City</div>
<div class="t" style="left:598px;top:423.02px;font-size:13px;color:#222;">2008</div>
<div class="t" style="left:683px;top:423.02px;font-size:13px;color:#222;">12 rokov</div>
<div class="t" style="left:744px;top:423.02px;font-size:13px;color:#222;">RK-018BD, RK-216BC, RK-221BC</div>
<div class="t" style="left:963px;width:101px;text-align:right;top:423.02px;font-size:13px;color:#222">3</div>
<div class="t" style="left:1075px;top:423.02px;font-size:13px;color:#222;">nízkopodlažné vozidlo</div>
<div class="t" style="left:461px;top:449.02px;font-size:13px;color:#222;">SOR C 10.5</div>
<div class="t" style="left:598px;top:449.02px;font-size:13px;color:#222;">2009</div>
<div class="t" style="left:683px;top:449.02px;font-size:13px;color:#222;">11 rokov</div>
<div class="t" style="left:744px;top:449.02px;font-size:13px;color:#222;">RK-595BD</div>
<div class="t" style="left:963px;width:101px;text-align:right;top:449.02px;font-size:13px;color:#222">1</div>
<div class="t" style="left:1075px;top:449.02px;font-size:13px;color:#222;"></div>
<div class="abs" style="left:456px;top:468px;width:758px;height:26px;background:#f0f1f7"></div>
<div class="t" style="left:461px;top:475.02px;font-size:13px;color:#222;">SOR C 10.5</div>
<div class="t" style="left:598px;top:475.02px;font-size:13px;color:#222;">2010</div>
<div class="t" style="left:683px;top:475.02px;font-size:13px;color:#222;">10 rokov</div>
<div class="t" style="left:744px;top:475.02px;font-size:13px;color:#222;">RK-648BH</div>
<div class="t" style="left:963px;width:101px;text-align:right;top:475.02px;font-size:13px;color:#222">1</div>
<div class="t" style="left:1075px;top:475.02px;font-size:13px;color:#222;"></div>
<div class="t" style="left:461px;top:501.02px;font-size:13px;font-weight:bold;color:#222;letter-spacing:0.15px;">Počet vozidiel</div>
<div class="t" style="left:1075px;top:501.02px;font-size:13px;font-weight:bold;color:#222;letter-spacing:0.15px;">19</div>
<div class="abs" style="left:456px;top:520px;width:758px;height:26px;background:#f0f1f7"></div>
<div class="t" style="left:461px;top:527.02px;font-size:13px;font-weight:bold;color:#222;letter-spacing:0.15px;">Počet prevádzkových vozidiel</div>
<div class="t" style="left:1075px;top:527.02px;font-size:13px;font-weight:bold;color:#222;letter-spacing:0.15px;">19 (100%)</div>
<div class="t" style="left:461px;top:553.02px;font-size:13px;font-weight:bold;color:#222;letter-spacing:0.15px;">Priemerný vek prevádzkových vozidiel</div>
<div class="t" style="left:1075px;top:553.02px;font-size:13px;font-weight:bold;color:#222;letter-spacing:0.15px;">9 rokov</div>
<div class="abs" style="left:456px;top:572px;width:758px;height:26px;background:#f0f1f7"></div>
<div class="t" style="left:461px;top:579.02px;font-size:13px;font-weight:bold;color:#222;letter-spacing:0.15px;">Počet nízkopodlažných prevádzkových vozidiel</div>
<div class="t" style="left:1075px;top:579.02px;font-size:13px;font-weight:bold;color:#222;letter-spacing:0.15px;">3 (15.8%)</div>
<div class="t" style="left:441px;top:637.49px;font-size:16px;font-weight:bold;color:#1a3060;">Súhrn</div>
<div class="abs" style="left:440px;top:664px;width:790px;height:106px;border:1px solid #cdd4ea"></div>
<div class="abs" style="left:441px;top:665px;width:788px;height:26px;background:#f0f1f7"></div>
<div class="t" style="left:446px;top:672.02px;font-size:13px;font-weight:bold;color:#222;letter-spacing:0.15px;">Počet vozidiel</div>
<div class="t" style="left:1093px;top:672.02px;font-size:13px;font-weight:bold;color:#222;letter-spacing:0.15px;">19</div>
<div class="t" style="left:446px;top:698.02px;font-size:13px;font-weight:bold;color:#222;letter-spacing:0.15px;">Počet prevádzkových vozidiel</div>
<div class="t" style="left:1093px;top:698.02px;font-size:13px;font-weight:bold;color:#222;letter-spacing:0.15px;">19 (100%)</div>
<div class="abs" style="left:441px;top:717px;width:788px;height:26px;background:#f0f1f7"></div>
<div class="t" style="left:446px;top:724.02px;font-size:13px;font-weight:bold;color:#222;letter-spacing:0.15px;">Priemerný vek prevádzkových vozidiel</div>
<div class="t" style="left:1093px;top:724.02px;font-size:13px;font-weight:bold;color:#222;letter-spacing:0.15px;">9 rokov</div>
<div class="t" style="left:446px;top:750.02px;font-size:13px;font-weight:bold;color:#222;letter-spacing:0.15px;">Počet nízkopodlažných prevádzkových vozidiel</div>
<div class="t" style="left:1093px;top:750.02px;font-size:13px;font-weight:bold;color:#222;letter-spacing:0.15px;">3 (15.8%)</div>
<div class="abs" style="left:245px;top:785px;width:1000px;height:1px;background:#dfe3ee"></div>
<div class="t" style="left:245px;top:803.02px;font-size:13px;color:#222;">Copyright © imhd.sk, 2000-2020</div>
<div class="t" style="left:441px;top:803.02px;font-size:13px;color:#34489a;">Autorské práva</div>
<div class="t" style="left:541px;top:803.02px;font-size:13px;color:#34489a;">Podmienky používania</div>
<div class="t" style="left:1079px;top:803.02px;font-size:13px;color:#34489a;">Úvod</div>
<div class="t" style="left:1121px;top:803.02px;font-size:13px;color:#34489a;">O imhd.sk</div>
<div class="t" style="left:1195px;top:803.02px;font-size:13px;color:#34489a;">Kontakt</div>
</body></html>
